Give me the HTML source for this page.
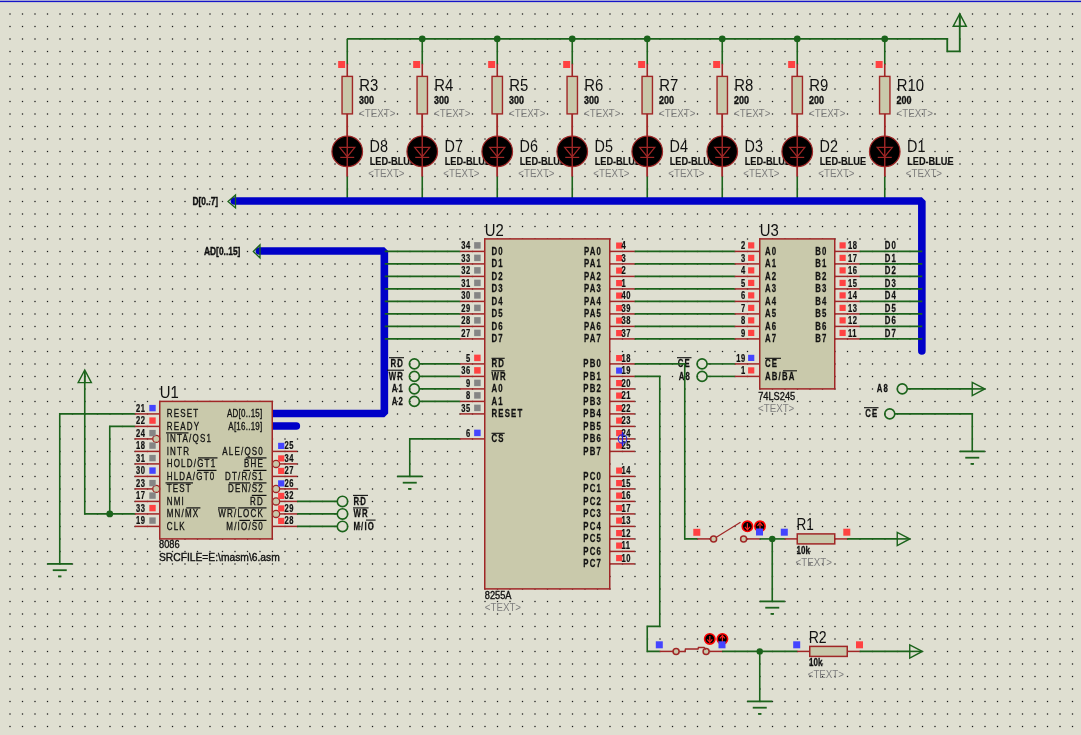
<!DOCTYPE html><html><head><meta charset="utf-8"><style>html,body{margin:0;padding:0;background:#dfdfd1;overflow:hidden}svg{display:block;will-change:transform}text{font-family:"Liberation Sans", sans-serif}</style></head><body>
<svg width="1081" height="735" viewBox="0 0 1081 735">
<defs><pattern id="g" x="0" y="0" width="25" height="25" patternUnits="userSpaceOnUse"><rect x="21.85" y="0.85" width="1.3" height="1.3" fill="#1c1c1c"/><rect x="9.35" y="0.85" width="1.3" height="1.3" fill="#1c1c1c"/><rect x="21.85" y="13.35" width="1.3" height="1.3" fill="#1c1c1c"/><rect x="9.35" y="13.35" width="1.3" height="1.3" fill="#1c1c1c"/></pattern></defs>
<rect width="1081" height="735" fill="#dfdfd1"/>
<rect x="0" y="8" width="1081" height="727" fill="url(#g)"/>
<rect x="0" y="0" width="1081" height="1" fill="#a4a4d8"/><rect x="0" y="1" width="1081" height="1" fill="#1414c8"/><rect x="0" y="2" width="1081" height="1" fill="#9898d0" fill-opacity="0.35"/>
<path d="M347.25 38.9 L947.25 38.9 L947.25 51.4 L959.75 51.4 L959.75 14" stroke="#1b631b" stroke-width="1.8" fill="none" stroke-linecap="butt" stroke-linejoin="miter"/>
<path d="M959.75 13.8 L953.15 26.3 L966.35 26.3 Z" fill="none" stroke="#1b631b" stroke-width="1.4"/>
<path d="M959.75 26.3 L959.75 14.8" stroke="#1b631b" stroke-width="1.6" fill="none" stroke-linecap="butt" stroke-linejoin="miter"/>
<path d="M347.25 38.9 L347.25 63.9" stroke="#1b631b" stroke-width="1.6" fill="none" stroke-linecap="butt" stroke-linejoin="miter"/>
<path d="M347.25 63.9 L347.25 176.4" stroke="#a02626" stroke-width="1.6" fill="none" stroke-linecap="butt" stroke-linejoin="miter"/>
<path d="M347.25 176.4 L347.25 201.4" stroke="#1b631b" stroke-width="1.6" fill="none" stroke-linecap="butt" stroke-linejoin="miter"/>
<rect x="342.05" y="76.4" width="10.4" height="37.5" fill="#c9c9ab" stroke="#a02626" stroke-width="1.4"/>
<rect x="338.15" y="61" width="7" height="7" fill="#ff4242"/>
<circle cx="347.25" cy="151.4" r="15.3" fill="#000" stroke="#a02626" stroke-width="1.2"/>
<path d="M339.65 147.4 L354.85 147.4 L347.25 156.7 Z" fill="none" stroke="#a02626" stroke-width="1.2"/>
<path d="M340.25 157.4 L354.25 157.4" stroke="#a02626" stroke-width="1.2" fill="none" stroke-linecap="butt" stroke-linejoin="miter"/>
<path d="M347.25 113.9 L347.25 176.4" stroke="#a02626" stroke-width="1.4" fill="none" stroke-linecap="butt" stroke-linejoin="miter"/>
<text transform="translate(359.25 90.8) scale(0.93 1)" font-size="16" font-weight="normal" fill="#111111" text-anchor="start">R3</text>
<text transform="translate(359.05 104.3) scale(0.9 1)" font-size="10" font-weight="bold" fill="#111111" text-anchor="start" stroke="#111111" stroke-width="0.3">300</text>
<text transform="translate(359.05 116.8) scale(0.93 1)" font-size="10.5" font-weight="normal" fill="#7e7e7e" text-anchor="start">&lt;TEXT&gt;</text>
<text transform="translate(369.55 151.5) scale(0.9 1)" font-size="16" font-weight="normal" fill="#111111" text-anchor="start">D8</text>
<text transform="translate(369.65 164.8) scale(0.92 1)" font-size="10" font-weight="bold" fill="#111111" text-anchor="start" stroke="#111111" stroke-width="0.15">LED-BLUE</text>
<text transform="translate(368.25 176.8) scale(0.93 1)" font-size="10.5" font-weight="normal" fill="#7e7e7e" text-anchor="start">&lt;TEXT&gt;</text>
<path d="M422.25 38.9 L422.25 63.9" stroke="#1b631b" stroke-width="1.6" fill="none" stroke-linecap="butt" stroke-linejoin="miter"/>
<path d="M422.25 63.9 L422.25 176.4" stroke="#a02626" stroke-width="1.6" fill="none" stroke-linecap="butt" stroke-linejoin="miter"/>
<path d="M422.25 176.4 L422.25 201.4" stroke="#1b631b" stroke-width="1.6" fill="none" stroke-linecap="butt" stroke-linejoin="miter"/>
<rect x="417.05" y="76.4" width="10.4" height="37.5" fill="#c9c9ab" stroke="#a02626" stroke-width="1.4"/>
<rect x="413.15" y="61" width="7" height="7" fill="#ff4242"/>
<circle cx="422.25" cy="38.9" r="3.3" fill="#1b631b"/>
<circle cx="422.25" cy="151.4" r="15.3" fill="#000" stroke="#a02626" stroke-width="1.2"/>
<path d="M414.65 147.4 L429.85 147.4 L422.25 156.7 Z" fill="none" stroke="#a02626" stroke-width="1.2"/>
<path d="M415.25 157.4 L429.25 157.4" stroke="#a02626" stroke-width="1.2" fill="none" stroke-linecap="butt" stroke-linejoin="miter"/>
<path d="M422.25 113.9 L422.25 176.4" stroke="#a02626" stroke-width="1.4" fill="none" stroke-linecap="butt" stroke-linejoin="miter"/>
<text transform="translate(434.25 90.8) scale(0.93 1)" font-size="16" font-weight="normal" fill="#111111" text-anchor="start">R4</text>
<text transform="translate(434.05 104.3) scale(0.9 1)" font-size="10" font-weight="bold" fill="#111111" text-anchor="start" stroke="#111111" stroke-width="0.3">300</text>
<text transform="translate(434.05 116.8) scale(0.93 1)" font-size="10.5" font-weight="normal" fill="#7e7e7e" text-anchor="start">&lt;TEXT&gt;</text>
<text transform="translate(444.55 151.5) scale(0.9 1)" font-size="16" font-weight="normal" fill="#111111" text-anchor="start">D7</text>
<text transform="translate(444.65 164.8) scale(0.92 1)" font-size="10" font-weight="bold" fill="#111111" text-anchor="start" stroke="#111111" stroke-width="0.15">LED-BLUE</text>
<text transform="translate(443.25 176.8) scale(0.93 1)" font-size="10.5" font-weight="normal" fill="#7e7e7e" text-anchor="start">&lt;TEXT&gt;</text>
<path d="M497.25 38.9 L497.25 63.9" stroke="#1b631b" stroke-width="1.6" fill="none" stroke-linecap="butt" stroke-linejoin="miter"/>
<path d="M497.25 63.9 L497.25 176.4" stroke="#a02626" stroke-width="1.6" fill="none" stroke-linecap="butt" stroke-linejoin="miter"/>
<path d="M497.25 176.4 L497.25 201.4" stroke="#1b631b" stroke-width="1.6" fill="none" stroke-linecap="butt" stroke-linejoin="miter"/>
<rect x="492.05" y="76.4" width="10.4" height="37.5" fill="#c9c9ab" stroke="#a02626" stroke-width="1.4"/>
<rect x="488.15" y="61" width="7" height="7" fill="#ff4242"/>
<circle cx="497.25" cy="38.9" r="3.3" fill="#1b631b"/>
<circle cx="497.25" cy="151.4" r="15.3" fill="#000" stroke="#a02626" stroke-width="1.2"/>
<path d="M489.65 147.4 L504.85 147.4 L497.25 156.7 Z" fill="none" stroke="#a02626" stroke-width="1.2"/>
<path d="M490.25 157.4 L504.25 157.4" stroke="#a02626" stroke-width="1.2" fill="none" stroke-linecap="butt" stroke-linejoin="miter"/>
<path d="M497.25 113.9 L497.25 176.4" stroke="#a02626" stroke-width="1.4" fill="none" stroke-linecap="butt" stroke-linejoin="miter"/>
<text transform="translate(509.25 90.8) scale(0.93 1)" font-size="16" font-weight="normal" fill="#111111" text-anchor="start">R5</text>
<text transform="translate(509.05 104.3) scale(0.9 1)" font-size="10" font-weight="bold" fill="#111111" text-anchor="start" stroke="#111111" stroke-width="0.3">300</text>
<text transform="translate(509.05 116.8) scale(0.93 1)" font-size="10.5" font-weight="normal" fill="#7e7e7e" text-anchor="start">&lt;TEXT&gt;</text>
<text transform="translate(519.55 151.5) scale(0.9 1)" font-size="16" font-weight="normal" fill="#111111" text-anchor="start">D6</text>
<text transform="translate(519.65 164.8) scale(0.92 1)" font-size="10" font-weight="bold" fill="#111111" text-anchor="start" stroke="#111111" stroke-width="0.15">LED-BLUE</text>
<text transform="translate(518.25 176.8) scale(0.93 1)" font-size="10.5" font-weight="normal" fill="#7e7e7e" text-anchor="start">&lt;TEXT&gt;</text>
<path d="M572.25 38.9 L572.25 63.9" stroke="#1b631b" stroke-width="1.6" fill="none" stroke-linecap="butt" stroke-linejoin="miter"/>
<path d="M572.25 63.9 L572.25 176.4" stroke="#a02626" stroke-width="1.6" fill="none" stroke-linecap="butt" stroke-linejoin="miter"/>
<path d="M572.25 176.4 L572.25 201.4" stroke="#1b631b" stroke-width="1.6" fill="none" stroke-linecap="butt" stroke-linejoin="miter"/>
<rect x="567.05" y="76.4" width="10.4" height="37.5" fill="#c9c9ab" stroke="#a02626" stroke-width="1.4"/>
<rect x="563.15" y="61" width="7" height="7" fill="#ff4242"/>
<circle cx="572.25" cy="38.9" r="3.3" fill="#1b631b"/>
<circle cx="572.25" cy="151.4" r="15.3" fill="#000" stroke="#a02626" stroke-width="1.2"/>
<path d="M564.65 147.4 L579.85 147.4 L572.25 156.7 Z" fill="none" stroke="#a02626" stroke-width="1.2"/>
<path d="M565.25 157.4 L579.25 157.4" stroke="#a02626" stroke-width="1.2" fill="none" stroke-linecap="butt" stroke-linejoin="miter"/>
<path d="M572.25 113.9 L572.25 176.4" stroke="#a02626" stroke-width="1.4" fill="none" stroke-linecap="butt" stroke-linejoin="miter"/>
<text transform="translate(584.25 90.8) scale(0.93 1)" font-size="16" font-weight="normal" fill="#111111" text-anchor="start">R6</text>
<text transform="translate(584.05 104.3) scale(0.9 1)" font-size="10" font-weight="bold" fill="#111111" text-anchor="start" stroke="#111111" stroke-width="0.3">300</text>
<text transform="translate(584.05 116.8) scale(0.93 1)" font-size="10.5" font-weight="normal" fill="#7e7e7e" text-anchor="start">&lt;TEXT&gt;</text>
<text transform="translate(594.55 151.5) scale(0.9 1)" font-size="16" font-weight="normal" fill="#111111" text-anchor="start">D5</text>
<text transform="translate(594.65 164.8) scale(0.92 1)" font-size="10" font-weight="bold" fill="#111111" text-anchor="start" stroke="#111111" stroke-width="0.15">LED-BLUE</text>
<text transform="translate(593.25 176.8) scale(0.93 1)" font-size="10.5" font-weight="normal" fill="#7e7e7e" text-anchor="start">&lt;TEXT&gt;</text>
<path d="M647.25 38.9 L647.25 63.9" stroke="#1b631b" stroke-width="1.6" fill="none" stroke-linecap="butt" stroke-linejoin="miter"/>
<path d="M647.25 63.9 L647.25 176.4" stroke="#a02626" stroke-width="1.6" fill="none" stroke-linecap="butt" stroke-linejoin="miter"/>
<path d="M647.25 176.4 L647.25 201.4" stroke="#1b631b" stroke-width="1.6" fill="none" stroke-linecap="butt" stroke-linejoin="miter"/>
<rect x="642.05" y="76.4" width="10.4" height="37.5" fill="#c9c9ab" stroke="#a02626" stroke-width="1.4"/>
<rect x="638.15" y="61" width="7" height="7" fill="#ff4242"/>
<circle cx="647.25" cy="38.9" r="3.3" fill="#1b631b"/>
<circle cx="647.25" cy="151.4" r="15.3" fill="#000" stroke="#a02626" stroke-width="1.2"/>
<path d="M639.65 147.4 L654.85 147.4 L647.25 156.7 Z" fill="none" stroke="#a02626" stroke-width="1.2"/>
<path d="M640.25 157.4 L654.25 157.4" stroke="#a02626" stroke-width="1.2" fill="none" stroke-linecap="butt" stroke-linejoin="miter"/>
<path d="M647.25 113.9 L647.25 176.4" stroke="#a02626" stroke-width="1.4" fill="none" stroke-linecap="butt" stroke-linejoin="miter"/>
<text transform="translate(659.25 90.8) scale(0.93 1)" font-size="16" font-weight="normal" fill="#111111" text-anchor="start">R7</text>
<text transform="translate(659.05 104.3) scale(0.9 1)" font-size="10" font-weight="bold" fill="#111111" text-anchor="start" stroke="#111111" stroke-width="0.3">200</text>
<text transform="translate(659.05 116.8) scale(0.93 1)" font-size="10.5" font-weight="normal" fill="#7e7e7e" text-anchor="start">&lt;TEXT&gt;</text>
<text transform="translate(669.55 151.5) scale(0.9 1)" font-size="16" font-weight="normal" fill="#111111" text-anchor="start">D4</text>
<text transform="translate(669.65 164.8) scale(0.92 1)" font-size="10" font-weight="bold" fill="#111111" text-anchor="start" stroke="#111111" stroke-width="0.15">LED-BLUE</text>
<text transform="translate(668.25 176.8) scale(0.93 1)" font-size="10.5" font-weight="normal" fill="#7e7e7e" text-anchor="start">&lt;TEXT&gt;</text>
<path d="M722.25 38.9 L722.25 63.9" stroke="#1b631b" stroke-width="1.6" fill="none" stroke-linecap="butt" stroke-linejoin="miter"/>
<path d="M722.25 63.9 L722.25 176.4" stroke="#a02626" stroke-width="1.6" fill="none" stroke-linecap="butt" stroke-linejoin="miter"/>
<path d="M722.25 176.4 L722.25 201.4" stroke="#1b631b" stroke-width="1.6" fill="none" stroke-linecap="butt" stroke-linejoin="miter"/>
<rect x="717.05" y="76.4" width="10.4" height="37.5" fill="#c9c9ab" stroke="#a02626" stroke-width="1.4"/>
<rect x="713.15" y="61" width="7" height="7" fill="#ff4242"/>
<circle cx="722.25" cy="38.9" r="3.3" fill="#1b631b"/>
<circle cx="722.25" cy="151.4" r="15.3" fill="#000" stroke="#a02626" stroke-width="1.2"/>
<path d="M714.65 147.4 L729.85 147.4 L722.25 156.7 Z" fill="none" stroke="#a02626" stroke-width="1.2"/>
<path d="M715.25 157.4 L729.25 157.4" stroke="#a02626" stroke-width="1.2" fill="none" stroke-linecap="butt" stroke-linejoin="miter"/>
<path d="M722.25 113.9 L722.25 176.4" stroke="#a02626" stroke-width="1.4" fill="none" stroke-linecap="butt" stroke-linejoin="miter"/>
<text transform="translate(734.25 90.8) scale(0.93 1)" font-size="16" font-weight="normal" fill="#111111" text-anchor="start">R8</text>
<text transform="translate(734.05 104.3) scale(0.9 1)" font-size="10" font-weight="bold" fill="#111111" text-anchor="start" stroke="#111111" stroke-width="0.3">200</text>
<text transform="translate(734.05 116.8) scale(0.93 1)" font-size="10.5" font-weight="normal" fill="#7e7e7e" text-anchor="start">&lt;TEXT&gt;</text>
<text transform="translate(744.55 151.5) scale(0.9 1)" font-size="16" font-weight="normal" fill="#111111" text-anchor="start">D3</text>
<text transform="translate(744.65 164.8) scale(0.92 1)" font-size="10" font-weight="bold" fill="#111111" text-anchor="start" stroke="#111111" stroke-width="0.15">LED-BLUE</text>
<text transform="translate(743.25 176.8) scale(0.93 1)" font-size="10.5" font-weight="normal" fill="#7e7e7e" text-anchor="start">&lt;TEXT&gt;</text>
<path d="M797.25 38.9 L797.25 63.9" stroke="#1b631b" stroke-width="1.6" fill="none" stroke-linecap="butt" stroke-linejoin="miter"/>
<path d="M797.25 63.9 L797.25 176.4" stroke="#a02626" stroke-width="1.6" fill="none" stroke-linecap="butt" stroke-linejoin="miter"/>
<path d="M797.25 176.4 L797.25 201.4" stroke="#1b631b" stroke-width="1.6" fill="none" stroke-linecap="butt" stroke-linejoin="miter"/>
<rect x="792.05" y="76.4" width="10.4" height="37.5" fill="#c9c9ab" stroke="#a02626" stroke-width="1.4"/>
<rect x="788.15" y="61" width="7" height="7" fill="#ff4242"/>
<circle cx="797.25" cy="38.9" r="3.3" fill="#1b631b"/>
<circle cx="797.25" cy="151.4" r="15.3" fill="#000" stroke="#a02626" stroke-width="1.2"/>
<path d="M789.65 147.4 L804.85 147.4 L797.25 156.7 Z" fill="none" stroke="#a02626" stroke-width="1.2"/>
<path d="M790.25 157.4 L804.25 157.4" stroke="#a02626" stroke-width="1.2" fill="none" stroke-linecap="butt" stroke-linejoin="miter"/>
<path d="M797.25 113.9 L797.25 176.4" stroke="#a02626" stroke-width="1.4" fill="none" stroke-linecap="butt" stroke-linejoin="miter"/>
<text transform="translate(809.25 90.8) scale(0.93 1)" font-size="16" font-weight="normal" fill="#111111" text-anchor="start">R9</text>
<text transform="translate(809.05 104.3) scale(0.9 1)" font-size="10" font-weight="bold" fill="#111111" text-anchor="start" stroke="#111111" stroke-width="0.3">200</text>
<text transform="translate(809.05 116.8) scale(0.93 1)" font-size="10.5" font-weight="normal" fill="#7e7e7e" text-anchor="start">&lt;TEXT&gt;</text>
<text transform="translate(819.55 151.5) scale(0.9 1)" font-size="16" font-weight="normal" fill="#111111" text-anchor="start">D2</text>
<text transform="translate(819.65 164.8) scale(0.92 1)" font-size="10" font-weight="bold" fill="#111111" text-anchor="start" stroke="#111111" stroke-width="0.15">LED-BLUE</text>
<text transform="translate(818.25 176.8) scale(0.93 1)" font-size="10.5" font-weight="normal" fill="#7e7e7e" text-anchor="start">&lt;TEXT&gt;</text>
<path d="M884.75 38.9 L884.75 63.9" stroke="#1b631b" stroke-width="1.6" fill="none" stroke-linecap="butt" stroke-linejoin="miter"/>
<path d="M884.75 63.9 L884.75 176.4" stroke="#a02626" stroke-width="1.6" fill="none" stroke-linecap="butt" stroke-linejoin="miter"/>
<path d="M884.75 176.4 L884.75 201.4" stroke="#1b631b" stroke-width="1.6" fill="none" stroke-linecap="butt" stroke-linejoin="miter"/>
<rect x="879.55" y="76.4" width="10.4" height="37.5" fill="#c9c9ab" stroke="#a02626" stroke-width="1.4"/>
<rect x="875.65" y="61" width="7" height="7" fill="#ff4242"/>
<circle cx="884.75" cy="38.9" r="3.3" fill="#1b631b"/>
<circle cx="884.75" cy="151.4" r="15.3" fill="#000" stroke="#a02626" stroke-width="1.2"/>
<path d="M877.15 147.4 L892.35 147.4 L884.75 156.7 Z" fill="none" stroke="#a02626" stroke-width="1.2"/>
<path d="M877.75 157.4 L891.75 157.4" stroke="#a02626" stroke-width="1.2" fill="none" stroke-linecap="butt" stroke-linejoin="miter"/>
<path d="M884.75 113.9 L884.75 176.4" stroke="#a02626" stroke-width="1.4" fill="none" stroke-linecap="butt" stroke-linejoin="miter"/>
<text transform="translate(896.75 90.8) scale(0.93 1)" font-size="16" font-weight="normal" fill="#111111" text-anchor="start">R10</text>
<text transform="translate(896.55 104.3) scale(0.9 1)" font-size="10" font-weight="bold" fill="#111111" text-anchor="start" stroke="#111111" stroke-width="0.3">200</text>
<text transform="translate(896.55 116.8) scale(0.93 1)" font-size="10.5" font-weight="normal" fill="#7e7e7e" text-anchor="start">&lt;TEXT&gt;</text>
<text transform="translate(907.05 151.5) scale(0.9 1)" font-size="16" font-weight="normal" fill="#111111" text-anchor="start">D1</text>
<text transform="translate(907.15 164.8) scale(0.92 1)" font-size="10" font-weight="bold" fill="#111111" text-anchor="start" stroke="#111111" stroke-width="0.15">LED-BLUE</text>
<text transform="translate(905.75 176.8) scale(0.93 1)" font-size="10.5" font-weight="normal" fill="#7e7e7e" text-anchor="start">&lt;TEXT&gt;</text>
<path d="M234.35 201 L921.85 201 L921.85 351" stroke="#0000c8" stroke-width="7.6" fill="none" stroke-linecap="round" stroke-linejoin="bevel"/>
<path d="M228 201.4 L235.5 194.9 L235.5 207.9 Z" fill="none" stroke="#1b631b" stroke-width="1.3"/>
<text transform="translate(192.5 205.2) scale(0.8 1)" font-size="10.5" font-weight="bold" fill="#111111" text-anchor="start" stroke="#111111" stroke-width="0.35">D[0..7]</text>
<path d="M259.35 251 L384.35 251 L384.35 413.5 L271.85 413.5" stroke="#0000c8" stroke-width="7.6" fill="none" stroke-linecap="round" stroke-linejoin="bevel"/>
<path d="M253.3 251.4 L260 244.9 L260 257.9 Z" fill="none" stroke="#1b631b" stroke-width="1.3"/>
<text transform="translate(204 255.2) scale(0.8 1)" font-size="10.5" font-weight="bold" fill="#111111" text-anchor="start" stroke="#111111" stroke-width="0.35">AD[0..15]</text>
<path d="M271.85 426 L296.35 426" stroke="#0000c8" stroke-width="7.6" fill="none" stroke-linecap="round" stroke-linejoin="bevel"/>
<rect x="484.75" y="238.9" width="125" height="350" fill="#c9c9ab" stroke="#a02626" stroke-width="1.5"/>
<text transform="translate(484.75 235.6) scale(0.93 1)" font-size="16" font-weight="normal" fill="#111111" text-anchor="start">U2</text>
<text transform="translate(484.75 598.6) scale(0.88 1)" font-size="10.5" font-weight="normal" fill="#111111" text-anchor="start" stroke="#111111" stroke-width="0.35">8255A</text>
<text transform="translate(484.75 611) scale(0.93 1)" font-size="10.5" font-weight="normal" fill="#7e7e7e" text-anchor="start">&lt;TEXT&gt;</text>
<path d="M459.75 251.4 L484.75 251.4" stroke="#a02626" stroke-width="1.5" fill="none" stroke-linecap="butt" stroke-linejoin="miter"/>
<rect x="474.15" y="242.15" width="6.5" height="6.5" fill="#858585"/>
<text transform="translate(470.8 249.4) scale(0.72 1)" font-size="10.5" font-weight="bold" fill="#111111" text-anchor="end" stroke="#111111" stroke-width="0.25" letter-spacing="0.8">34</text>
<text transform="translate(491.5 254.8) scale(0.78 1)" font-size="10" font-weight="bold" fill="#111111" text-anchor="start" stroke="#111111" stroke-width="0.25" letter-spacing="1.5">D0</text>
<path d="M459.75 263.9 L484.75 263.9" stroke="#a02626" stroke-width="1.5" fill="none" stroke-linecap="butt" stroke-linejoin="miter"/>
<rect x="474.15" y="254.65" width="6.5" height="6.5" fill="#858585"/>
<text transform="translate(470.8 261.9) scale(0.72 1)" font-size="10.5" font-weight="bold" fill="#111111" text-anchor="end" stroke="#111111" stroke-width="0.25" letter-spacing="0.8">33</text>
<text transform="translate(491.5 267.3) scale(0.78 1)" font-size="10" font-weight="bold" fill="#111111" text-anchor="start" stroke="#111111" stroke-width="0.25" letter-spacing="1.5">D1</text>
<path d="M459.75 276.4 L484.75 276.4" stroke="#a02626" stroke-width="1.5" fill="none" stroke-linecap="butt" stroke-linejoin="miter"/>
<rect x="474.15" y="267.15" width="6.5" height="6.5" fill="#858585"/>
<text transform="translate(470.8 274.4) scale(0.72 1)" font-size="10.5" font-weight="bold" fill="#111111" text-anchor="end" stroke="#111111" stroke-width="0.25" letter-spacing="0.8">32</text>
<text transform="translate(491.5 279.8) scale(0.78 1)" font-size="10" font-weight="bold" fill="#111111" text-anchor="start" stroke="#111111" stroke-width="0.25" letter-spacing="1.5">D2</text>
<path d="M459.75 288.9 L484.75 288.9" stroke="#a02626" stroke-width="1.5" fill="none" stroke-linecap="butt" stroke-linejoin="miter"/>
<rect x="474.15" y="279.65" width="6.5" height="6.5" fill="#858585"/>
<text transform="translate(470.8 286.9) scale(0.72 1)" font-size="10.5" font-weight="bold" fill="#111111" text-anchor="end" stroke="#111111" stroke-width="0.25" letter-spacing="0.8">31</text>
<text transform="translate(491.5 292.3) scale(0.78 1)" font-size="10" font-weight="bold" fill="#111111" text-anchor="start" stroke="#111111" stroke-width="0.25" letter-spacing="1.5">D3</text>
<path d="M459.75 301.4 L484.75 301.4" stroke="#a02626" stroke-width="1.5" fill="none" stroke-linecap="butt" stroke-linejoin="miter"/>
<rect x="474.15" y="292.15" width="6.5" height="6.5" fill="#858585"/>
<text transform="translate(470.8 299.4) scale(0.72 1)" font-size="10.5" font-weight="bold" fill="#111111" text-anchor="end" stroke="#111111" stroke-width="0.25" letter-spacing="0.8">30</text>
<text transform="translate(491.5 304.8) scale(0.78 1)" font-size="10" font-weight="bold" fill="#111111" text-anchor="start" stroke="#111111" stroke-width="0.25" letter-spacing="1.5">D4</text>
<path d="M459.75 313.9 L484.75 313.9" stroke="#a02626" stroke-width="1.5" fill="none" stroke-linecap="butt" stroke-linejoin="miter"/>
<rect x="474.15" y="304.65" width="6.5" height="6.5" fill="#858585"/>
<text transform="translate(470.8 311.9) scale(0.72 1)" font-size="10.5" font-weight="bold" fill="#111111" text-anchor="end" stroke="#111111" stroke-width="0.25" letter-spacing="0.8">29</text>
<text transform="translate(491.5 317.3) scale(0.78 1)" font-size="10" font-weight="bold" fill="#111111" text-anchor="start" stroke="#111111" stroke-width="0.25" letter-spacing="1.5">D5</text>
<path d="M459.75 326.4 L484.75 326.4" stroke="#a02626" stroke-width="1.5" fill="none" stroke-linecap="butt" stroke-linejoin="miter"/>
<rect x="474.15" y="317.15" width="6.5" height="6.5" fill="#858585"/>
<text transform="translate(470.8 324.4) scale(0.72 1)" font-size="10.5" font-weight="bold" fill="#111111" text-anchor="end" stroke="#111111" stroke-width="0.25" letter-spacing="0.8">28</text>
<text transform="translate(491.5 329.8) scale(0.78 1)" font-size="10" font-weight="bold" fill="#111111" text-anchor="start" stroke="#111111" stroke-width="0.25" letter-spacing="1.5">D6</text>
<path d="M459.75 338.9 L484.75 338.9" stroke="#a02626" stroke-width="1.5" fill="none" stroke-linecap="butt" stroke-linejoin="miter"/>
<rect x="474.15" y="329.65" width="6.5" height="6.5" fill="#858585"/>
<text transform="translate(470.8 336.9) scale(0.72 1)" font-size="10.5" font-weight="bold" fill="#111111" text-anchor="end" stroke="#111111" stroke-width="0.25" letter-spacing="0.8">27</text>
<text transform="translate(491.5 342.3) scale(0.78 1)" font-size="10" font-weight="bold" fill="#111111" text-anchor="start" stroke="#111111" stroke-width="0.25" letter-spacing="1.5">D7</text>
<path d="M459.75 363.9 L484.75 363.9" stroke="#a02626" stroke-width="1.5" fill="none" stroke-linecap="butt" stroke-linejoin="miter"/>
<rect x="474.15" y="354.65" width="6.5" height="6.5" fill="#ff4242"/>
<text transform="translate(470.8 361.9) scale(0.72 1)" font-size="10.5" font-weight="bold" fill="#111111" text-anchor="end" stroke="#111111" stroke-width="0.25" letter-spacing="0.8">5</text>
<text transform="translate(491.5 367.3) scale(0.78 1)" font-size="10" font-weight="bold" fill="#111111" text-anchor="start" stroke="#111111" stroke-width="0.25" letter-spacing="1.5">RD</text>
<path d="M491.5 358.3 L504.7 358.3" stroke="#111111" stroke-width="1.1" fill="none" stroke-linecap="butt" stroke-linejoin="miter"/>
<path d="M459.75 376.4 L484.75 376.4" stroke="#a02626" stroke-width="1.5" fill="none" stroke-linecap="butt" stroke-linejoin="miter"/>
<rect x="474.15" y="367.15" width="6.5" height="6.5" fill="#ff4242"/>
<text transform="translate(470.8 374.4) scale(0.72 1)" font-size="10.5" font-weight="bold" fill="#111111" text-anchor="end" stroke="#111111" stroke-width="0.25" letter-spacing="0.8">36</text>
<text transform="translate(491.5 379.8) scale(0.78 1)" font-size="10" font-weight="bold" fill="#111111" text-anchor="start" stroke="#111111" stroke-width="0.25" letter-spacing="1.5">WR</text>
<path d="M491.5 370.8 L504.7 370.8" stroke="#111111" stroke-width="1.1" fill="none" stroke-linecap="butt" stroke-linejoin="miter"/>
<path d="M459.75 388.9 L484.75 388.9" stroke="#a02626" stroke-width="1.5" fill="none" stroke-linecap="butt" stroke-linejoin="miter"/>
<rect x="474.15" y="379.65" width="6.5" height="6.5" fill="#858585"/>
<text transform="translate(470.8 386.9) scale(0.72 1)" font-size="10.5" font-weight="bold" fill="#111111" text-anchor="end" stroke="#111111" stroke-width="0.25" letter-spacing="0.8">9</text>
<text transform="translate(491.5 392.3) scale(0.78 1)" font-size="10" font-weight="bold" fill="#111111" text-anchor="start" stroke="#111111" stroke-width="0.25" letter-spacing="1.5">A0</text>
<path d="M459.75 401.4 L484.75 401.4" stroke="#a02626" stroke-width="1.5" fill="none" stroke-linecap="butt" stroke-linejoin="miter"/>
<rect x="474.15" y="392.15" width="6.5" height="6.5" fill="#858585"/>
<text transform="translate(470.8 399.4) scale(0.72 1)" font-size="10.5" font-weight="bold" fill="#111111" text-anchor="end" stroke="#111111" stroke-width="0.25" letter-spacing="0.8">8</text>
<text transform="translate(491.5 404.8) scale(0.78 1)" font-size="10" font-weight="bold" fill="#111111" text-anchor="start" stroke="#111111" stroke-width="0.25" letter-spacing="1.5">A1</text>
<path d="M459.75 413.9 L484.75 413.9" stroke="#a02626" stroke-width="1.5" fill="none" stroke-linecap="butt" stroke-linejoin="miter"/>
<rect x="474.15" y="404.65" width="6.5" height="6.5" fill="#858585"/>
<text transform="translate(470.8 411.9) scale(0.72 1)" font-size="10.5" font-weight="bold" fill="#111111" text-anchor="end" stroke="#111111" stroke-width="0.25" letter-spacing="0.8">35</text>
<text transform="translate(491.5 417.3) scale(0.78 1)" font-size="10" font-weight="bold" fill="#111111" text-anchor="start" stroke="#111111" stroke-width="0.25" letter-spacing="1.5">RESET</text>
<path d="M459.75 438.9 L484.75 438.9" stroke="#a02626" stroke-width="1.5" fill="none" stroke-linecap="butt" stroke-linejoin="miter"/>
<rect x="474.15" y="429.65" width="6.5" height="6.5" fill="#4444ff"/>
<text transform="translate(470.8 436.9) scale(0.72 1)" font-size="10.5" font-weight="bold" fill="#111111" text-anchor="end" stroke="#111111" stroke-width="0.25" letter-spacing="0.8">6</text>
<text transform="translate(491.5 442.3) scale(0.78 1)" font-size="10" font-weight="bold" fill="#111111" text-anchor="start" stroke="#111111" stroke-width="0.25" letter-spacing="1.5">CS</text>
<path d="M491.5 433.3 L504.7 433.3" stroke="#111111" stroke-width="1.1" fill="none" stroke-linecap="butt" stroke-linejoin="miter"/>
<path d="M609.75 251.4 L634.75 251.4" stroke="#a02626" stroke-width="1.5" fill="none" stroke-linecap="butt" stroke-linejoin="miter"/>
<rect x="616.1" y="242.5" width="6.2" height="6.2" fill="#ff4242"/>
<text transform="translate(621.5 249.4) scale(0.72 1)" font-size="10.5" font-weight="bold" fill="#111111" text-anchor="start" stroke="#111111" stroke-width="0.25" letter-spacing="0.8">4</text>
<text transform="translate(602 254.8) scale(0.78 1)" font-size="10" font-weight="bold" fill="#111111" text-anchor="end" stroke="#111111" stroke-width="0.25" letter-spacing="1.5">PA0</text>
<path d="M609.75 263.9 L634.75 263.9" stroke="#a02626" stroke-width="1.5" fill="none" stroke-linecap="butt" stroke-linejoin="miter"/>
<rect x="616.1" y="255" width="6.2" height="6.2" fill="#ff4242"/>
<text transform="translate(621.5 261.9) scale(0.72 1)" font-size="10.5" font-weight="bold" fill="#111111" text-anchor="start" stroke="#111111" stroke-width="0.25" letter-spacing="0.8">3</text>
<text transform="translate(602 267.3) scale(0.78 1)" font-size="10" font-weight="bold" fill="#111111" text-anchor="end" stroke="#111111" stroke-width="0.25" letter-spacing="1.5">PA1</text>
<path d="M609.75 276.4 L634.75 276.4" stroke="#a02626" stroke-width="1.5" fill="none" stroke-linecap="butt" stroke-linejoin="miter"/>
<rect x="616.1" y="267.5" width="6.2" height="6.2" fill="#ff4242"/>
<text transform="translate(621.5 274.4) scale(0.72 1)" font-size="10.5" font-weight="bold" fill="#111111" text-anchor="start" stroke="#111111" stroke-width="0.25" letter-spacing="0.8">2</text>
<text transform="translate(602 279.8) scale(0.78 1)" font-size="10" font-weight="bold" fill="#111111" text-anchor="end" stroke="#111111" stroke-width="0.25" letter-spacing="1.5">PA2</text>
<path d="M609.75 288.9 L634.75 288.9" stroke="#a02626" stroke-width="1.5" fill="none" stroke-linecap="butt" stroke-linejoin="miter"/>
<rect x="616.1" y="280" width="6.2" height="6.2" fill="#ff4242"/>
<text transform="translate(621.5 286.9) scale(0.72 1)" font-size="10.5" font-weight="bold" fill="#111111" text-anchor="start" stroke="#111111" stroke-width="0.25" letter-spacing="0.8">1</text>
<text transform="translate(602 292.3) scale(0.78 1)" font-size="10" font-weight="bold" fill="#111111" text-anchor="end" stroke="#111111" stroke-width="0.25" letter-spacing="1.5">PA3</text>
<path d="M609.75 301.4 L634.75 301.4" stroke="#a02626" stroke-width="1.5" fill="none" stroke-linecap="butt" stroke-linejoin="miter"/>
<rect x="616.1" y="292.5" width="6.2" height="6.2" fill="#ff4242"/>
<text transform="translate(621.5 299.4) scale(0.72 1)" font-size="10.5" font-weight="bold" fill="#111111" text-anchor="start" stroke="#111111" stroke-width="0.25" letter-spacing="0.8">40</text>
<text transform="translate(602 304.8) scale(0.78 1)" font-size="10" font-weight="bold" fill="#111111" text-anchor="end" stroke="#111111" stroke-width="0.25" letter-spacing="1.5">PA4</text>
<path d="M609.75 313.9 L634.75 313.9" stroke="#a02626" stroke-width="1.5" fill="none" stroke-linecap="butt" stroke-linejoin="miter"/>
<rect x="616.1" y="305" width="6.2" height="6.2" fill="#ff4242"/>
<text transform="translate(621.5 311.9) scale(0.72 1)" font-size="10.5" font-weight="bold" fill="#111111" text-anchor="start" stroke="#111111" stroke-width="0.25" letter-spacing="0.8">39</text>
<text transform="translate(602 317.3) scale(0.78 1)" font-size="10" font-weight="bold" fill="#111111" text-anchor="end" stroke="#111111" stroke-width="0.25" letter-spacing="1.5">PA5</text>
<path d="M609.75 326.4 L634.75 326.4" stroke="#a02626" stroke-width="1.5" fill="none" stroke-linecap="butt" stroke-linejoin="miter"/>
<rect x="616.1" y="317.5" width="6.2" height="6.2" fill="#ff4242"/>
<text transform="translate(621.5 324.4) scale(0.72 1)" font-size="10.5" font-weight="bold" fill="#111111" text-anchor="start" stroke="#111111" stroke-width="0.25" letter-spacing="0.8">38</text>
<text transform="translate(602 329.8) scale(0.78 1)" font-size="10" font-weight="bold" fill="#111111" text-anchor="end" stroke="#111111" stroke-width="0.25" letter-spacing="1.5">PA6</text>
<path d="M609.75 338.9 L634.75 338.9" stroke="#a02626" stroke-width="1.5" fill="none" stroke-linecap="butt" stroke-linejoin="miter"/>
<rect x="616.1" y="330" width="6.2" height="6.2" fill="#ff4242"/>
<text transform="translate(621.5 336.9) scale(0.72 1)" font-size="10.5" font-weight="bold" fill="#111111" text-anchor="start" stroke="#111111" stroke-width="0.25" letter-spacing="0.8">37</text>
<text transform="translate(602 342.3) scale(0.78 1)" font-size="10" font-weight="bold" fill="#111111" text-anchor="end" stroke="#111111" stroke-width="0.25" letter-spacing="1.5">PA7</text>
<path d="M609.75 363.9 L634.75 363.9" stroke="#a02626" stroke-width="1.5" fill="none" stroke-linecap="butt" stroke-linejoin="miter"/>
<rect x="616.1" y="355" width="6.2" height="6.2" fill="#ff4242"/>
<text transform="translate(621.5 361.9) scale(0.72 1)" font-size="10.5" font-weight="bold" fill="#111111" text-anchor="start" stroke="#111111" stroke-width="0.25" letter-spacing="0.8">18</text>
<text transform="translate(602 367.3) scale(0.78 1)" font-size="10" font-weight="bold" fill="#111111" text-anchor="end" stroke="#111111" stroke-width="0.25" letter-spacing="1.5">PB0</text>
<path d="M609.75 376.4 L634.75 376.4" stroke="#a02626" stroke-width="1.5" fill="none" stroke-linecap="butt" stroke-linejoin="miter"/>
<rect x="616.1" y="367.5" width="6.2" height="6.2" fill="#4444ff"/>
<text transform="translate(621.5 374.4) scale(0.72 1)" font-size="10.5" font-weight="bold" fill="#111111" text-anchor="start" stroke="#111111" stroke-width="0.25" letter-spacing="0.8">19</text>
<text transform="translate(602 379.8) scale(0.78 1)" font-size="10" font-weight="bold" fill="#111111" text-anchor="end" stroke="#111111" stroke-width="0.25" letter-spacing="1.5">PB1</text>
<path d="M609.75 388.9 L634.75 388.9" stroke="#a02626" stroke-width="1.5" fill="none" stroke-linecap="butt" stroke-linejoin="miter"/>
<rect x="616.1" y="380" width="6.2" height="6.2" fill="#ff4242"/>
<text transform="translate(621.5 386.9) scale(0.72 1)" font-size="10.5" font-weight="bold" fill="#111111" text-anchor="start" stroke="#111111" stroke-width="0.25" letter-spacing="0.8">20</text>
<text transform="translate(602 392.3) scale(0.78 1)" font-size="10" font-weight="bold" fill="#111111" text-anchor="end" stroke="#111111" stroke-width="0.25" letter-spacing="1.5">PB2</text>
<path d="M609.75 401.4 L634.75 401.4" stroke="#a02626" stroke-width="1.5" fill="none" stroke-linecap="butt" stroke-linejoin="miter"/>
<rect x="616.1" y="392.5" width="6.2" height="6.2" fill="#ff4242"/>
<text transform="translate(621.5 399.4) scale(0.72 1)" font-size="10.5" font-weight="bold" fill="#111111" text-anchor="start" stroke="#111111" stroke-width="0.25" letter-spacing="0.8">21</text>
<text transform="translate(602 404.8) scale(0.78 1)" font-size="10" font-weight="bold" fill="#111111" text-anchor="end" stroke="#111111" stroke-width="0.25" letter-spacing="1.5">PB3</text>
<path d="M609.75 413.9 L634.75 413.9" stroke="#a02626" stroke-width="1.5" fill="none" stroke-linecap="butt" stroke-linejoin="miter"/>
<rect x="616.1" y="405" width="6.2" height="6.2" fill="#ff4242"/>
<text transform="translate(621.5 411.9) scale(0.72 1)" font-size="10.5" font-weight="bold" fill="#111111" text-anchor="start" stroke="#111111" stroke-width="0.25" letter-spacing="0.8">22</text>
<text transform="translate(602 417.3) scale(0.78 1)" font-size="10" font-weight="bold" fill="#111111" text-anchor="end" stroke="#111111" stroke-width="0.25" letter-spacing="1.5">PB4</text>
<path d="M609.75 426.4 L634.75 426.4" stroke="#a02626" stroke-width="1.5" fill="none" stroke-linecap="butt" stroke-linejoin="miter"/>
<rect x="616.1" y="417.5" width="6.2" height="6.2" fill="#ff4242"/>
<text transform="translate(621.5 424.4) scale(0.72 1)" font-size="10.5" font-weight="bold" fill="#111111" text-anchor="start" stroke="#111111" stroke-width="0.25" letter-spacing="0.8">23</text>
<text transform="translate(602 429.8) scale(0.78 1)" font-size="10" font-weight="bold" fill="#111111" text-anchor="end" stroke="#111111" stroke-width="0.25" letter-spacing="1.5">PB5</text>
<path d="M609.75 438.9 L634.75 438.9" stroke="#a02626" stroke-width="1.5" fill="none" stroke-linecap="butt" stroke-linejoin="miter"/>
<rect x="616.1" y="430" width="6.2" height="6.2" fill="#ff4242"/>
<text transform="translate(621.5 436.9) scale(0.72 1)" font-size="10.5" font-weight="bold" fill="#111111" text-anchor="start" stroke="#111111" stroke-width="0.25" letter-spacing="0.8">24</text>
<text transform="translate(602 442.3) scale(0.78 1)" font-size="10" font-weight="bold" fill="#111111" text-anchor="end" stroke="#111111" stroke-width="0.25" letter-spacing="1.5">PB6</text>
<path d="M609.75 451.4 L634.75 451.4" stroke="#a02626" stroke-width="1.5" fill="none" stroke-linecap="butt" stroke-linejoin="miter"/>
<rect x="616.1" y="442.5" width="6.2" height="6.2" fill="#ff4242"/>
<text transform="translate(621.5 449.4) scale(0.72 1)" font-size="10.5" font-weight="bold" fill="#111111" text-anchor="start" stroke="#111111" stroke-width="0.25" letter-spacing="0.8">25</text>
<text transform="translate(602 454.8) scale(0.78 1)" font-size="10" font-weight="bold" fill="#111111" text-anchor="end" stroke="#111111" stroke-width="0.25" letter-spacing="1.5">PB7</text>
<path d="M609.75 476.4 L634.75 476.4" stroke="#a02626" stroke-width="1.5" fill="none" stroke-linecap="butt" stroke-linejoin="miter"/>
<rect x="616.1" y="467.5" width="6.2" height="6.2" fill="#ff4242"/>
<text transform="translate(621.5 474.4) scale(0.72 1)" font-size="10.5" font-weight="bold" fill="#111111" text-anchor="start" stroke="#111111" stroke-width="0.25" letter-spacing="0.8">14</text>
<text transform="translate(602 479.8) scale(0.78 1)" font-size="10" font-weight="bold" fill="#111111" text-anchor="end" stroke="#111111" stroke-width="0.25" letter-spacing="1.5">PC0</text>
<path d="M609.75 488.9 L634.75 488.9" stroke="#a02626" stroke-width="1.5" fill="none" stroke-linecap="butt" stroke-linejoin="miter"/>
<rect x="616.1" y="480" width="6.2" height="6.2" fill="#ff4242"/>
<text transform="translate(621.5 486.9) scale(0.72 1)" font-size="10.5" font-weight="bold" fill="#111111" text-anchor="start" stroke="#111111" stroke-width="0.25" letter-spacing="0.8">15</text>
<text transform="translate(602 492.3) scale(0.78 1)" font-size="10" font-weight="bold" fill="#111111" text-anchor="end" stroke="#111111" stroke-width="0.25" letter-spacing="1.5">PC1</text>
<path d="M609.75 501.4 L634.75 501.4" stroke="#a02626" stroke-width="1.5" fill="none" stroke-linecap="butt" stroke-linejoin="miter"/>
<rect x="616.1" y="492.5" width="6.2" height="6.2" fill="#ff4242"/>
<text transform="translate(621.5 499.4) scale(0.72 1)" font-size="10.5" font-weight="bold" fill="#111111" text-anchor="start" stroke="#111111" stroke-width="0.25" letter-spacing="0.8">16</text>
<text transform="translate(602 504.8) scale(0.78 1)" font-size="10" font-weight="bold" fill="#111111" text-anchor="end" stroke="#111111" stroke-width="0.25" letter-spacing="1.5">PC2</text>
<path d="M609.75 513.9 L634.75 513.9" stroke="#a02626" stroke-width="1.5" fill="none" stroke-linecap="butt" stroke-linejoin="miter"/>
<rect x="616.1" y="505" width="6.2" height="6.2" fill="#ff4242"/>
<text transform="translate(621.5 511.9) scale(0.72 1)" font-size="10.5" font-weight="bold" fill="#111111" text-anchor="start" stroke="#111111" stroke-width="0.25" letter-spacing="0.8">17</text>
<text transform="translate(602 517.3) scale(0.78 1)" font-size="10" font-weight="bold" fill="#111111" text-anchor="end" stroke="#111111" stroke-width="0.25" letter-spacing="1.5">PC3</text>
<path d="M609.75 526.4 L634.75 526.4" stroke="#a02626" stroke-width="1.5" fill="none" stroke-linecap="butt" stroke-linejoin="miter"/>
<rect x="616.1" y="517.5" width="6.2" height="6.2" fill="#ff4242"/>
<text transform="translate(621.5 524.4) scale(0.72 1)" font-size="10.5" font-weight="bold" fill="#111111" text-anchor="start" stroke="#111111" stroke-width="0.25" letter-spacing="0.8">13</text>
<text transform="translate(602 529.8) scale(0.78 1)" font-size="10" font-weight="bold" fill="#111111" text-anchor="end" stroke="#111111" stroke-width="0.25" letter-spacing="1.5">PC4</text>
<path d="M609.75 538.9 L634.75 538.9" stroke="#a02626" stroke-width="1.5" fill="none" stroke-linecap="butt" stroke-linejoin="miter"/>
<rect x="616.1" y="530" width="6.2" height="6.2" fill="#ff4242"/>
<text transform="translate(621.5 536.9) scale(0.72 1)" font-size="10.5" font-weight="bold" fill="#111111" text-anchor="start" stroke="#111111" stroke-width="0.25" letter-spacing="0.8">12</text>
<text transform="translate(602 542.3) scale(0.78 1)" font-size="10" font-weight="bold" fill="#111111" text-anchor="end" stroke="#111111" stroke-width="0.25" letter-spacing="1.5">PC5</text>
<path d="M609.75 551.4 L634.75 551.4" stroke="#a02626" stroke-width="1.5" fill="none" stroke-linecap="butt" stroke-linejoin="miter"/>
<rect x="616.1" y="542.5" width="6.2" height="6.2" fill="#ff4242"/>
<text transform="translate(621.5 549.4) scale(0.72 1)" font-size="10.5" font-weight="bold" fill="#111111" text-anchor="start" stroke="#111111" stroke-width="0.25" letter-spacing="0.8">11</text>
<text transform="translate(602 554.8) scale(0.78 1)" font-size="10" font-weight="bold" fill="#111111" text-anchor="end" stroke="#111111" stroke-width="0.25" letter-spacing="1.5">PC6</text>
<path d="M609.75 563.9 L634.75 563.9" stroke="#a02626" stroke-width="1.5" fill="none" stroke-linecap="butt" stroke-linejoin="miter"/>
<rect x="616.1" y="555" width="6.2" height="6.2" fill="#ff4242"/>
<text transform="translate(621.5 561.9) scale(0.72 1)" font-size="10.5" font-weight="bold" fill="#111111" text-anchor="start" stroke="#111111" stroke-width="0.25" letter-spacing="0.8">10</text>
<text transform="translate(602 567.3) scale(0.78 1)" font-size="10" font-weight="bold" fill="#111111" text-anchor="end" stroke="#111111" stroke-width="0.25" letter-spacing="1.5">PC7</text>
<path d="M384.75 251.4 L459.75 251.4" stroke="#1b631b" stroke-width="1.6" fill="none" stroke-linecap="butt" stroke-linejoin="miter"/>
<path d="M384.75 263.9 L459.75 263.9" stroke="#1b631b" stroke-width="1.6" fill="none" stroke-linecap="butt" stroke-linejoin="miter"/>
<path d="M384.75 276.4 L459.75 276.4" stroke="#1b631b" stroke-width="1.6" fill="none" stroke-linecap="butt" stroke-linejoin="miter"/>
<path d="M384.75 288.9 L459.75 288.9" stroke="#1b631b" stroke-width="1.6" fill="none" stroke-linecap="butt" stroke-linejoin="miter"/>
<path d="M384.75 301.4 L459.75 301.4" stroke="#1b631b" stroke-width="1.6" fill="none" stroke-linecap="butt" stroke-linejoin="miter"/>
<path d="M384.75 313.9 L459.75 313.9" stroke="#1b631b" stroke-width="1.6" fill="none" stroke-linecap="butt" stroke-linejoin="miter"/>
<path d="M384.75 326.4 L459.75 326.4" stroke="#1b631b" stroke-width="1.6" fill="none" stroke-linecap="butt" stroke-linejoin="miter"/>
<path d="M384.75 338.9 L459.75 338.9" stroke="#1b631b" stroke-width="1.6" fill="none" stroke-linecap="butt" stroke-linejoin="miter"/>
<circle cx="414.35" cy="363.9" r="5" fill="none" stroke="#1b631b" stroke-width="1.6"/>
<path d="M419.35 363.9 L459.75 363.9" stroke="#1b631b" stroke-width="1.6" fill="none" stroke-linecap="butt" stroke-linejoin="miter"/>
<text transform="translate(404 367.4) scale(0.78 1)" font-size="10" font-weight="bold" fill="#111111" text-anchor="end" stroke="#111111" stroke-width="0.25" letter-spacing="1.5">RD</text>
<circle cx="414.35" cy="376.4" r="5" fill="none" stroke="#1b631b" stroke-width="1.6"/>
<path d="M419.35 376.4 L459.75 376.4" stroke="#1b631b" stroke-width="1.6" fill="none" stroke-linecap="butt" stroke-linejoin="miter"/>
<text transform="translate(404 379.9) scale(0.78 1)" font-size="10" font-weight="bold" fill="#111111" text-anchor="end" stroke="#111111" stroke-width="0.25" letter-spacing="1.5">WR</text>
<circle cx="414.35" cy="388.9" r="5" fill="none" stroke="#1b631b" stroke-width="1.6"/>
<path d="M419.35 388.9 L459.75 388.9" stroke="#1b631b" stroke-width="1.6" fill="none" stroke-linecap="butt" stroke-linejoin="miter"/>
<text transform="translate(404 392.4) scale(0.78 1)" font-size="10" font-weight="bold" fill="#111111" text-anchor="end" stroke="#111111" stroke-width="0.25" letter-spacing="1.5">A1</text>
<circle cx="414.35" cy="401.4" r="5" fill="none" stroke="#1b631b" stroke-width="1.6"/>
<path d="M419.35 401.4 L459.75 401.4" stroke="#1b631b" stroke-width="1.6" fill="none" stroke-linecap="butt" stroke-linejoin="miter"/>
<text transform="translate(404 404.9) scale(0.78 1)" font-size="10" font-weight="bold" fill="#111111" text-anchor="end" stroke="#111111" stroke-width="0.25" letter-spacing="1.5">A2</text>
<path d="M389 357.7 L404 357.7" stroke="#111111" stroke-width="1.1" fill="none" stroke-linecap="butt" stroke-linejoin="miter"/>
<path d="M387 370.2 L404 370.2" stroke="#111111" stroke-width="1.1" fill="none" stroke-linecap="butt" stroke-linejoin="miter"/>
<path d="M459.75 438.9 L409.75 438.9 L409.75 476.4" stroke="#1b631b" stroke-width="1.6" fill="none" stroke-linecap="butt" stroke-linejoin="miter"/>
<path d="M397.25 476.4 L422.25 476.4" stroke="#1b631b" stroke-width="1.8" fill="none" stroke-linecap="butt" stroke-linejoin="miter"/>
<path d="M402.75 482.7 L416.75 482.7" stroke="#1b631b" stroke-width="1.8" fill="none" stroke-linecap="butt" stroke-linejoin="miter"/>
<path d="M408.05 488.9 L411.45 488.9" stroke="#1b631b" stroke-width="1.8" fill="none" stroke-linecap="butt" stroke-linejoin="miter"/>
<path d="M634.75 251.4 L734.75 251.4" stroke="#1b631b" stroke-width="1.6" fill="none" stroke-linecap="butt" stroke-linejoin="miter"/>
<path d="M634.75 263.9 L734.75 263.9" stroke="#1b631b" stroke-width="1.6" fill="none" stroke-linecap="butt" stroke-linejoin="miter"/>
<path d="M634.75 276.4 L734.75 276.4" stroke="#1b631b" stroke-width="1.6" fill="none" stroke-linecap="butt" stroke-linejoin="miter"/>
<path d="M634.75 288.9 L734.75 288.9" stroke="#1b631b" stroke-width="1.6" fill="none" stroke-linecap="butt" stroke-linejoin="miter"/>
<path d="M634.75 301.4 L734.75 301.4" stroke="#1b631b" stroke-width="1.6" fill="none" stroke-linecap="butt" stroke-linejoin="miter"/>
<path d="M634.75 313.9 L734.75 313.9" stroke="#1b631b" stroke-width="1.6" fill="none" stroke-linecap="butt" stroke-linejoin="miter"/>
<path d="M634.75 326.4 L734.75 326.4" stroke="#1b631b" stroke-width="1.6" fill="none" stroke-linecap="butt" stroke-linejoin="miter"/>
<path d="M634.75 338.9 L734.75 338.9" stroke="#1b631b" stroke-width="1.6" fill="none" stroke-linecap="butt" stroke-linejoin="miter"/>
<rect x="759.75" y="238.9" width="75" height="150" fill="#c9c9ab" stroke="#a02626" stroke-width="1.5"/>
<text transform="translate(759.75 235.6) scale(0.93 1)" font-size="16" font-weight="normal" fill="#111111" text-anchor="start">U3</text>
<text transform="translate(758.2 399.5) scale(0.88 1)" font-size="10.5" font-weight="normal" fill="#111111" text-anchor="start" stroke="#111111" stroke-width="0.35">74LS245</text>
<text transform="translate(758 411.8) scale(0.93 1)" font-size="10.5" font-weight="normal" fill="#7e7e7e" text-anchor="start">&lt;TEXT&gt;</text>
<path d="M734.75 251.4 L759.75 251.4" stroke="#a02626" stroke-width="1.5" fill="none" stroke-linecap="butt" stroke-linejoin="miter"/>
<rect x="748.1" y="242.3" width="6.2" height="6.2" fill="#ff4242"/>
<text transform="translate(745.8 249.4) scale(0.72 1)" font-size="10.5" font-weight="bold" fill="#111111" text-anchor="end" stroke="#111111" stroke-width="0.25" letter-spacing="0.8">2</text>
<text transform="translate(765 254.8) scale(0.78 1)" font-size="10" font-weight="bold" fill="#111111" text-anchor="start" stroke="#111111" stroke-width="0.25" letter-spacing="1.5">A0</text>
<path d="M734.75 263.9 L759.75 263.9" stroke="#a02626" stroke-width="1.5" fill="none" stroke-linecap="butt" stroke-linejoin="miter"/>
<rect x="748.1" y="254.8" width="6.2" height="6.2" fill="#ff4242"/>
<text transform="translate(745.8 261.9) scale(0.72 1)" font-size="10.5" font-weight="bold" fill="#111111" text-anchor="end" stroke="#111111" stroke-width="0.25" letter-spacing="0.8">3</text>
<text transform="translate(765 267.3) scale(0.78 1)" font-size="10" font-weight="bold" fill="#111111" text-anchor="start" stroke="#111111" stroke-width="0.25" letter-spacing="1.5">A1</text>
<path d="M734.75 276.4 L759.75 276.4" stroke="#a02626" stroke-width="1.5" fill="none" stroke-linecap="butt" stroke-linejoin="miter"/>
<rect x="748.1" y="267.3" width="6.2" height="6.2" fill="#ff4242"/>
<text transform="translate(745.8 274.4) scale(0.72 1)" font-size="10.5" font-weight="bold" fill="#111111" text-anchor="end" stroke="#111111" stroke-width="0.25" letter-spacing="0.8">4</text>
<text transform="translate(765 279.8) scale(0.78 1)" font-size="10" font-weight="bold" fill="#111111" text-anchor="start" stroke="#111111" stroke-width="0.25" letter-spacing="1.5">A2</text>
<path d="M734.75 288.9 L759.75 288.9" stroke="#a02626" stroke-width="1.5" fill="none" stroke-linecap="butt" stroke-linejoin="miter"/>
<rect x="748.1" y="279.8" width="6.2" height="6.2" fill="#ff4242"/>
<text transform="translate(745.8 286.9) scale(0.72 1)" font-size="10.5" font-weight="bold" fill="#111111" text-anchor="end" stroke="#111111" stroke-width="0.25" letter-spacing="0.8">5</text>
<text transform="translate(765 292.3) scale(0.78 1)" font-size="10" font-weight="bold" fill="#111111" text-anchor="start" stroke="#111111" stroke-width="0.25" letter-spacing="1.5">A3</text>
<path d="M734.75 301.4 L759.75 301.4" stroke="#a02626" stroke-width="1.5" fill="none" stroke-linecap="butt" stroke-linejoin="miter"/>
<rect x="748.1" y="292.3" width="6.2" height="6.2" fill="#ff4242"/>
<text transform="translate(745.8 299.4) scale(0.72 1)" font-size="10.5" font-weight="bold" fill="#111111" text-anchor="end" stroke="#111111" stroke-width="0.25" letter-spacing="0.8">6</text>
<text transform="translate(765 304.8) scale(0.78 1)" font-size="10" font-weight="bold" fill="#111111" text-anchor="start" stroke="#111111" stroke-width="0.25" letter-spacing="1.5">A4</text>
<path d="M734.75 313.9 L759.75 313.9" stroke="#a02626" stroke-width="1.5" fill="none" stroke-linecap="butt" stroke-linejoin="miter"/>
<rect x="748.1" y="304.8" width="6.2" height="6.2" fill="#ff4242"/>
<text transform="translate(745.8 311.9) scale(0.72 1)" font-size="10.5" font-weight="bold" fill="#111111" text-anchor="end" stroke="#111111" stroke-width="0.25" letter-spacing="0.8">7</text>
<text transform="translate(765 317.3) scale(0.78 1)" font-size="10" font-weight="bold" fill="#111111" text-anchor="start" stroke="#111111" stroke-width="0.25" letter-spacing="1.5">A5</text>
<path d="M734.75 326.4 L759.75 326.4" stroke="#a02626" stroke-width="1.5" fill="none" stroke-linecap="butt" stroke-linejoin="miter"/>
<rect x="748.1" y="317.3" width="6.2" height="6.2" fill="#ff4242"/>
<text transform="translate(745.8 324.4) scale(0.72 1)" font-size="10.5" font-weight="bold" fill="#111111" text-anchor="end" stroke="#111111" stroke-width="0.25" letter-spacing="0.8">8</text>
<text transform="translate(765 329.8) scale(0.78 1)" font-size="10" font-weight="bold" fill="#111111" text-anchor="start" stroke="#111111" stroke-width="0.25" letter-spacing="1.5">A6</text>
<path d="M734.75 338.9 L759.75 338.9" stroke="#a02626" stroke-width="1.5" fill="none" stroke-linecap="butt" stroke-linejoin="miter"/>
<rect x="748.1" y="329.8" width="6.2" height="6.2" fill="#ff4242"/>
<text transform="translate(745.8 336.9) scale(0.72 1)" font-size="10.5" font-weight="bold" fill="#111111" text-anchor="end" stroke="#111111" stroke-width="0.25" letter-spacing="0.8">9</text>
<text transform="translate(765 342.3) scale(0.78 1)" font-size="10" font-weight="bold" fill="#111111" text-anchor="start" stroke="#111111" stroke-width="0.25" letter-spacing="1.5">A7</text>
<path d="M834.75 251.4 L859.75 251.4" stroke="#a02626" stroke-width="1.5" fill="none" stroke-linecap="butt" stroke-linejoin="miter"/>
<path d="M859.75 251.4 L922.25 251.4" stroke="#1b631b" stroke-width="1.6" fill="none" stroke-linecap="butt" stroke-linejoin="miter"/>
<rect x="839.5" y="242.3" width="6.2" height="6.2" fill="#ff4242"/>
<text transform="translate(848 249.4) scale(0.72 1)" font-size="10.5" font-weight="bold" fill="#111111" text-anchor="start" stroke="#111111" stroke-width="0.25" letter-spacing="0.8">18</text>
<text transform="translate(827.5 254.8) scale(0.78 1)" font-size="10" font-weight="bold" fill="#111111" text-anchor="end" stroke="#111111" stroke-width="0.25" letter-spacing="1.5">B0</text>
<text transform="translate(884.8 249.4) scale(0.78 1)" font-size="10" font-weight="bold" fill="#111111" text-anchor="start" stroke="#111111" stroke-width="0.25" letter-spacing="1.5">D0</text>
<path d="M834.75 263.9 L859.75 263.9" stroke="#a02626" stroke-width="1.5" fill="none" stroke-linecap="butt" stroke-linejoin="miter"/>
<path d="M859.75 263.9 L922.25 263.9" stroke="#1b631b" stroke-width="1.6" fill="none" stroke-linecap="butt" stroke-linejoin="miter"/>
<rect x="839.5" y="254.8" width="6.2" height="6.2" fill="#ff4242"/>
<text transform="translate(848 261.9) scale(0.72 1)" font-size="10.5" font-weight="bold" fill="#111111" text-anchor="start" stroke="#111111" stroke-width="0.25" letter-spacing="0.8">17</text>
<text transform="translate(827.5 267.3) scale(0.78 1)" font-size="10" font-weight="bold" fill="#111111" text-anchor="end" stroke="#111111" stroke-width="0.25" letter-spacing="1.5">B1</text>
<text transform="translate(884.8 261.9) scale(0.78 1)" font-size="10" font-weight="bold" fill="#111111" text-anchor="start" stroke="#111111" stroke-width="0.25" letter-spacing="1.5">D1</text>
<path d="M834.75 276.4 L859.75 276.4" stroke="#a02626" stroke-width="1.5" fill="none" stroke-linecap="butt" stroke-linejoin="miter"/>
<path d="M859.75 276.4 L922.25 276.4" stroke="#1b631b" stroke-width="1.6" fill="none" stroke-linecap="butt" stroke-linejoin="miter"/>
<rect x="839.5" y="267.3" width="6.2" height="6.2" fill="#ff4242"/>
<text transform="translate(848 274.4) scale(0.72 1)" font-size="10.5" font-weight="bold" fill="#111111" text-anchor="start" stroke="#111111" stroke-width="0.25" letter-spacing="0.8">16</text>
<text transform="translate(827.5 279.8) scale(0.78 1)" font-size="10" font-weight="bold" fill="#111111" text-anchor="end" stroke="#111111" stroke-width="0.25" letter-spacing="1.5">B2</text>
<text transform="translate(884.8 274.4) scale(0.78 1)" font-size="10" font-weight="bold" fill="#111111" text-anchor="start" stroke="#111111" stroke-width="0.25" letter-spacing="1.5">D2</text>
<path d="M834.75 288.9 L859.75 288.9" stroke="#a02626" stroke-width="1.5" fill="none" stroke-linecap="butt" stroke-linejoin="miter"/>
<path d="M859.75 288.9 L922.25 288.9" stroke="#1b631b" stroke-width="1.6" fill="none" stroke-linecap="butt" stroke-linejoin="miter"/>
<rect x="839.5" y="279.8" width="6.2" height="6.2" fill="#ff4242"/>
<text transform="translate(848 286.9) scale(0.72 1)" font-size="10.5" font-weight="bold" fill="#111111" text-anchor="start" stroke="#111111" stroke-width="0.25" letter-spacing="0.8">15</text>
<text transform="translate(827.5 292.3) scale(0.78 1)" font-size="10" font-weight="bold" fill="#111111" text-anchor="end" stroke="#111111" stroke-width="0.25" letter-spacing="1.5">B3</text>
<text transform="translate(884.8 286.9) scale(0.78 1)" font-size="10" font-weight="bold" fill="#111111" text-anchor="start" stroke="#111111" stroke-width="0.25" letter-spacing="1.5">D3</text>
<path d="M834.75 301.4 L859.75 301.4" stroke="#a02626" stroke-width="1.5" fill="none" stroke-linecap="butt" stroke-linejoin="miter"/>
<path d="M859.75 301.4 L922.25 301.4" stroke="#1b631b" stroke-width="1.6" fill="none" stroke-linecap="butt" stroke-linejoin="miter"/>
<rect x="839.5" y="292.3" width="6.2" height="6.2" fill="#ff4242"/>
<text transform="translate(848 299.4) scale(0.72 1)" font-size="10.5" font-weight="bold" fill="#111111" text-anchor="start" stroke="#111111" stroke-width="0.25" letter-spacing="0.8">14</text>
<text transform="translate(827.5 304.8) scale(0.78 1)" font-size="10" font-weight="bold" fill="#111111" text-anchor="end" stroke="#111111" stroke-width="0.25" letter-spacing="1.5">B4</text>
<text transform="translate(884.8 299.4) scale(0.78 1)" font-size="10" font-weight="bold" fill="#111111" text-anchor="start" stroke="#111111" stroke-width="0.25" letter-spacing="1.5">D4</text>
<path d="M834.75 313.9 L859.75 313.9" stroke="#a02626" stroke-width="1.5" fill="none" stroke-linecap="butt" stroke-linejoin="miter"/>
<path d="M859.75 313.9 L922.25 313.9" stroke="#1b631b" stroke-width="1.6" fill="none" stroke-linecap="butt" stroke-linejoin="miter"/>
<rect x="839.5" y="304.8" width="6.2" height="6.2" fill="#ff4242"/>
<text transform="translate(848 311.9) scale(0.72 1)" font-size="10.5" font-weight="bold" fill="#111111" text-anchor="start" stroke="#111111" stroke-width="0.25" letter-spacing="0.8">13</text>
<text transform="translate(827.5 317.3) scale(0.78 1)" font-size="10" font-weight="bold" fill="#111111" text-anchor="end" stroke="#111111" stroke-width="0.25" letter-spacing="1.5">B5</text>
<text transform="translate(884.8 311.9) scale(0.78 1)" font-size="10" font-weight="bold" fill="#111111" text-anchor="start" stroke="#111111" stroke-width="0.25" letter-spacing="1.5">D5</text>
<path d="M834.75 326.4 L859.75 326.4" stroke="#a02626" stroke-width="1.5" fill="none" stroke-linecap="butt" stroke-linejoin="miter"/>
<path d="M859.75 326.4 L922.25 326.4" stroke="#1b631b" stroke-width="1.6" fill="none" stroke-linecap="butt" stroke-linejoin="miter"/>
<rect x="839.5" y="317.3" width="6.2" height="6.2" fill="#ff4242"/>
<text transform="translate(848 324.4) scale(0.72 1)" font-size="10.5" font-weight="bold" fill="#111111" text-anchor="start" stroke="#111111" stroke-width="0.25" letter-spacing="0.8">12</text>
<text transform="translate(827.5 329.8) scale(0.78 1)" font-size="10" font-weight="bold" fill="#111111" text-anchor="end" stroke="#111111" stroke-width="0.25" letter-spacing="1.5">B6</text>
<text transform="translate(884.8 324.4) scale(0.78 1)" font-size="10" font-weight="bold" fill="#111111" text-anchor="start" stroke="#111111" stroke-width="0.25" letter-spacing="1.5">D6</text>
<path d="M834.75 338.9 L859.75 338.9" stroke="#a02626" stroke-width="1.5" fill="none" stroke-linecap="butt" stroke-linejoin="miter"/>
<path d="M859.75 338.9 L922.25 338.9" stroke="#1b631b" stroke-width="1.6" fill="none" stroke-linecap="butt" stroke-linejoin="miter"/>
<rect x="839.5" y="329.8" width="6.2" height="6.2" fill="#ff4242"/>
<text transform="translate(848 336.9) scale(0.72 1)" font-size="10.5" font-weight="bold" fill="#111111" text-anchor="start" stroke="#111111" stroke-width="0.25" letter-spacing="0.8">11</text>
<text transform="translate(827.5 342.3) scale(0.78 1)" font-size="10" font-weight="bold" fill="#111111" text-anchor="end" stroke="#111111" stroke-width="0.25" letter-spacing="1.5">B7</text>
<text transform="translate(884.8 336.9) scale(0.78 1)" font-size="10" font-weight="bold" fill="#111111" text-anchor="start" stroke="#111111" stroke-width="0.25" letter-spacing="1.5">D7</text>
<path d="M734.75 363.9 L759.75 363.9" stroke="#a02626" stroke-width="1.5" fill="none" stroke-linecap="butt" stroke-linejoin="miter"/>
<rect x="748.1" y="354.8" width="6.2" height="6.2" fill="#4444ff"/>
<text transform="translate(745.8 361.9) scale(0.72 1)" font-size="10.5" font-weight="bold" fill="#111111" text-anchor="end" stroke="#111111" stroke-width="0.25" letter-spacing="0.8">19</text>
<text transform="translate(765 367.3) scale(0.78 1)" font-size="10" font-weight="bold" fill="#111111" text-anchor="start" stroke="#111111" stroke-width="0.25" letter-spacing="1.5">CE</text>
<path d="M765 358.3 L781 358.3" stroke="#111111" stroke-width="1.1" fill="none" stroke-linecap="butt" stroke-linejoin="miter"/>
<path d="M734.75 376.4 L759.75 376.4" stroke="#a02626" stroke-width="1.5" fill="none" stroke-linecap="butt" stroke-linejoin="miter"/>
<rect x="748.1" y="367.3" width="6.2" height="6.2" fill="#ff4242"/>
<text transform="translate(745.8 374.4) scale(0.72 1)" font-size="10.5" font-weight="bold" fill="#111111" text-anchor="end" stroke="#111111" stroke-width="0.25" letter-spacing="0.8">1</text>
<text transform="translate(765 379.8) scale(0.78 1)" font-size="10" font-weight="bold" fill="#111111" text-anchor="start" stroke="#111111" stroke-width="0.25" letter-spacing="1.5">AB/BA</text>
<path d="M783 370.8 L797 370.8" stroke="#111111" stroke-width="1.1" fill="none" stroke-linecap="butt" stroke-linejoin="miter"/>
<circle cx="702.05" cy="363.9" r="5" fill="none" stroke="#1b631b" stroke-width="1.6"/>
<path d="M707.05 363.9 L734.75 363.9" stroke="#1b631b" stroke-width="1.6" fill="none" stroke-linecap="butt" stroke-linejoin="miter"/>
<text transform="translate(691 367.4) scale(0.78 1)" font-size="10" font-weight="bold" fill="#111111" text-anchor="end" stroke="#111111" stroke-width="0.25" letter-spacing="1.5">CE</text>
<circle cx="702.05" cy="376.4" r="5" fill="none" stroke="#1b631b" stroke-width="1.6"/>
<path d="M707.05 376.4 L734.75 376.4" stroke="#1b631b" stroke-width="1.6" fill="none" stroke-linecap="butt" stroke-linejoin="miter"/>
<text transform="translate(691 379.9) scale(0.78 1)" font-size="10" font-weight="bold" fill="#111111" text-anchor="end" stroke="#111111" stroke-width="0.25" letter-spacing="1.5">A8</text>
<path d="M677 357.7 L691.5 357.7" stroke="#111111" stroke-width="1.1" fill="none" stroke-linecap="butt" stroke-linejoin="miter"/>
<circle cx="902.25" cy="388.9" r="5" fill="none" stroke="#1b631b" stroke-width="1.6"/>
<path d="M907.25 388.9 L972.25 388.9" stroke="#1b631b" stroke-width="1.6" fill="none" stroke-linecap="butt" stroke-linejoin="miter"/>
<path d="M984.75 388.9 L972.25 382.3 L972.25 395.5 Z" fill="none" stroke="#1b631b" stroke-width="1.4"/>
<path d="M972.25 388.9 L983.75 388.9" stroke="#1b631b" stroke-width="1.6" fill="none" stroke-linecap="butt" stroke-linejoin="miter"/>
<text transform="translate(889 392.4) scale(0.78 1)" font-size="10" font-weight="bold" fill="#111111" text-anchor="end" stroke="#111111" stroke-width="0.25" letter-spacing="1.5">A8</text>
<circle cx="889.75" cy="413.9" r="5" fill="none" stroke="#1b631b" stroke-width="1.6"/>
<path d="M894.75 413.9 L972.25 413.9 L972.25 451.4" stroke="#1b631b" stroke-width="1.6" fill="none" stroke-linecap="butt" stroke-linejoin="miter"/>
<path d="M959.75 451.4 L984.75 451.4" stroke="#1b631b" stroke-width="1.8" fill="none" stroke-linecap="butt" stroke-linejoin="miter"/>
<path d="M965.25 457.7 L979.25 457.7" stroke="#1b631b" stroke-width="1.8" fill="none" stroke-linecap="butt" stroke-linejoin="miter"/>
<path d="M970.55 463.9 L973.95 463.9" stroke="#1b631b" stroke-width="1.8" fill="none" stroke-linecap="butt" stroke-linejoin="miter"/>
<text transform="translate(878.5 417.4) scale(0.78 1)" font-size="10" font-weight="bold" fill="#111111" text-anchor="end" stroke="#111111" stroke-width="0.25" letter-spacing="1.5">CE</text>
<path d="M864 407.7 L878.5 407.7" stroke="#111111" stroke-width="1.1" fill="none" stroke-linecap="butt" stroke-linejoin="miter"/>
<path d="M634.75 363.9 L684.75 363.9 L684.75 538.9 L697.25 538.9" stroke="#1b631b" stroke-width="1.6" fill="none" stroke-linecap="butt" stroke-linejoin="miter"/>
<path d="M634.75 376.4 L659.75 376.4 L659.75 626.4 L647.25 626.4 L647.25 651.4 L659.75 651.4" stroke="#1b631b" stroke-width="1.6" fill="none" stroke-linecap="butt" stroke-linejoin="miter"/>
<circle cx="622.5" cy="439" r="4.3" fill="none" stroke="#2828e0" stroke-width="1.1"/>
<path d="M622.5 431.8 L622.5 446" stroke="#2020e0" stroke-width="1.3" fill="none" stroke-linecap="butt" stroke-linejoin="miter"/>
<path d="M697.25 538.9 L716.25 538.9" stroke="#a02626" stroke-width="1.5" fill="none" stroke-linecap="butt" stroke-linejoin="miter"/>
<circle cx="713.6" cy="538.9" r="3" fill="#c9c9ab" stroke="#a02626" stroke-width="1.5"/>
<circle cx="743.6" cy="538.9" r="3" fill="#c9c9ab" stroke="#a02626" stroke-width="1.5"/>
<path d="M716.3 537.3 L740.5 522.2" stroke="#a02626" stroke-width="1.2" fill="none" stroke-linecap="butt" stroke-linejoin="miter"/>
<path d="M746.6 538.9 L759.75 538.9" stroke="#a02626" stroke-width="1.5" fill="none" stroke-linecap="butt" stroke-linejoin="miter"/>
<path d="M759.75 538.9 L784.75 538.9" stroke="#1b631b" stroke-width="1.6" fill="none" stroke-linecap="butt" stroke-linejoin="miter"/>
<circle cx="772.25" cy="538.9" r="3.2" fill="#1b631b"/>
<path d="M772.25 538.9 L772.25 601.4" stroke="#1b631b" stroke-width="1.6" fill="none" stroke-linecap="butt" stroke-linejoin="miter"/>
<path d="M759.75 601.4 L784.75 601.4" stroke="#1b631b" stroke-width="1.8" fill="none" stroke-linecap="butt" stroke-linejoin="miter"/>
<path d="M765.25 607.7 L779.25 607.7" stroke="#1b631b" stroke-width="1.8" fill="none" stroke-linecap="butt" stroke-linejoin="miter"/>
<path d="M770.55 613.9 L773.95 613.9" stroke="#1b631b" stroke-width="1.8" fill="none" stroke-linecap="butt" stroke-linejoin="miter"/>
<rect x="693.3" y="528.8" width="7" height="7" fill="#ff4242"/>
<circle cx="747.4" cy="526.3" r="5.2" fill="#000" stroke="#ff0000" stroke-width="1.6"/>
<path d="M747.4 523.3 L747.4 529.3" stroke="#ff2020" stroke-width="1.2" fill="none" stroke-linecap="butt" stroke-linejoin="miter"/>
<path d="M744.9 526.8 L747.4 529.8 L749.9 526.8" stroke="#ff2020" stroke-width="1.2" fill="none" stroke-linecap="butt" stroke-linejoin="miter"/>
<circle cx="760" cy="526.3" r="5.2" fill="#000" stroke="#ff0000" stroke-width="1.6"/>
<path d="M760 529.3 L760 523.3" stroke="#ff2020" stroke-width="1.2" fill="none" stroke-linecap="butt" stroke-linejoin="miter"/>
<path d="M757.5 525.8 L760 522.8 L762.5 525.8" stroke="#ff2020" stroke-width="1.2" fill="none" stroke-linecap="butt" stroke-linejoin="miter"/>
<rect x="756" y="528.5" width="7" height="7" fill="#4444ff"/>
<rect x="780.8" y="528.7" width="7" height="7" fill="#4444ff"/>
<path d="M784.75 538.9 L797.25 538.9" stroke="#a02626" stroke-width="1.5" fill="none" stroke-linecap="butt" stroke-linejoin="miter"/>
<path d="M834.75 538.9 L847.25 538.9" stroke="#a02626" stroke-width="1.5" fill="none" stroke-linecap="butt" stroke-linejoin="miter"/>
<rect x="797.25" y="533.9" width="37.5" height="10" fill="#c9c9ab" stroke="#a02626" stroke-width="1.5"/>
<rect x="843.3" y="528.7" width="7" height="7" fill="#ff4242"/>
<path d="M847.25 538.9 L897.25 538.9" stroke="#1b631b" stroke-width="1.6" fill="none" stroke-linecap="butt" stroke-linejoin="miter"/>
<path d="M909.75 538.9 L897.25 532.3 L897.25 545.5 Z" fill="none" stroke="#1b631b" stroke-width="1.4"/>
<path d="M897.25 538.9 L908.75 538.9" stroke="#1b631b" stroke-width="1.6" fill="none" stroke-linecap="butt" stroke-linejoin="miter"/>
<text transform="translate(796.5 530) scale(0.85 1)" font-size="16" font-weight="normal" fill="#111111" text-anchor="start">R1</text>
<text transform="translate(796.6 553.8) scale(0.8 1)" font-size="10" font-weight="bold" fill="#111111" text-anchor="start" stroke="#111111" stroke-width="0.3">10k</text>
<text transform="translate(795.6 566) scale(0.93 1)" font-size="10.5" font-weight="normal" fill="#7e7e7e" text-anchor="start">&lt;TEXT&gt;</text>
<path d="M659.75 651.4 L673.1 651.4" stroke="#a02626" stroke-width="1.5" fill="none" stroke-linecap="butt" stroke-linejoin="miter"/>
<circle cx="676.1" cy="651.4" r="3" fill="#c9c9ab" stroke="#a02626" stroke-width="1.5"/>
<circle cx="706.1" cy="651.4" r="3" fill="#c9c9ab" stroke="#a02626" stroke-width="1.5"/>
<path d="M679 651.4 L685 651.4 L685.5 648.9 L698 648.9 L698.5 647.4 L704 647.4 L706 649.4" stroke="#a02626" stroke-width="1.5" fill="none" stroke-linecap="butt" stroke-linejoin="miter"/>
<path d="M709.1 651.4 L722.25 651.4" stroke="#a02626" stroke-width="1.5" fill="none" stroke-linecap="butt" stroke-linejoin="miter"/>
<path d="M722.25 651.4 L797.25 651.4" stroke="#1b631b" stroke-width="1.6" fill="none" stroke-linecap="butt" stroke-linejoin="miter"/>
<circle cx="759.75" cy="651.4" r="3.2" fill="#1b631b"/>
<path d="M759.75 651.4 L759.75 701.4" stroke="#1b631b" stroke-width="1.6" fill="none" stroke-linecap="butt" stroke-linejoin="miter"/>
<path d="M747.25 701.4 L772.25 701.4" stroke="#1b631b" stroke-width="1.8" fill="none" stroke-linecap="butt" stroke-linejoin="miter"/>
<path d="M752.75 707.7 L766.75 707.7" stroke="#1b631b" stroke-width="1.8" fill="none" stroke-linecap="butt" stroke-linejoin="miter"/>
<path d="M758.05 713.9 L761.45 713.9" stroke="#1b631b" stroke-width="1.8" fill="none" stroke-linecap="butt" stroke-linejoin="miter"/>
<rect x="655.8" y="641.3" width="7" height="7" fill="#4444ff"/>
<circle cx="709.8" cy="638.9" r="5.2" fill="#000" stroke="#ff0000" stroke-width="1.6"/>
<path d="M709.8 635.9 L709.8 641.9" stroke="#ff2020" stroke-width="1.2" fill="none" stroke-linecap="butt" stroke-linejoin="miter"/>
<path d="M707.3 639.4 L709.8 642.4 L712.3 639.4" stroke="#ff2020" stroke-width="1.2" fill="none" stroke-linecap="butt" stroke-linejoin="miter"/>
<circle cx="722.4" cy="638.9" r="5.2" fill="#000" stroke="#ff0000" stroke-width="1.6"/>
<path d="M722.4 641.9 L722.4 635.9" stroke="#ff2020" stroke-width="1.2" fill="none" stroke-linecap="butt" stroke-linejoin="miter"/>
<path d="M719.9 638.4 L722.4 635.4 L724.9 638.4" stroke="#ff2020" stroke-width="1.2" fill="none" stroke-linecap="butt" stroke-linejoin="miter"/>
<rect x="718.5" y="641.3" width="7" height="7" fill="#4444ff"/>
<rect x="793.2" y="641.3" width="7" height="7" fill="#4444ff"/>
<path d="M797.25 651.4 L809.75 651.4" stroke="#a02626" stroke-width="1.5" fill="none" stroke-linecap="butt" stroke-linejoin="miter"/>
<path d="M847.25 651.4 L859.75 651.4" stroke="#a02626" stroke-width="1.5" fill="none" stroke-linecap="butt" stroke-linejoin="miter"/>
<rect x="809.75" y="646.4" width="37.5" height="10" fill="#c9c9ab" stroke="#a02626" stroke-width="1.5"/>
<rect x="856" y="641.3" width="7" height="7" fill="#ff4242"/>
<path d="M859.75 651.4 L909.75 651.4" stroke="#1b631b" stroke-width="1.6" fill="none" stroke-linecap="butt" stroke-linejoin="miter"/>
<path d="M922.25 651.4 L909.75 644.8 L909.75 658 Z" fill="none" stroke="#1b631b" stroke-width="1.4"/>
<path d="M909.75 651.4 L921.25 651.4" stroke="#1b631b" stroke-width="1.6" fill="none" stroke-linecap="butt" stroke-linejoin="miter"/>
<text transform="translate(808.7 642.5) scale(0.88 1)" font-size="16" font-weight="normal" fill="#111111" text-anchor="start">R2</text>
<text transform="translate(809 666.4) scale(0.8 1)" font-size="10" font-weight="bold" fill="#111111" text-anchor="start" stroke="#111111" stroke-width="0.3">10k</text>
<text transform="translate(807.7 678.3) scale(0.93 1)" font-size="10.5" font-weight="normal" fill="#7e7e7e" text-anchor="start">&lt;TEXT&gt;</text>
<rect x="159.75" y="401.4" width="112.5" height="137.5" fill="#c9c9ab" stroke="#a02626" stroke-width="1.5"/>
<text transform="translate(159.75 398.3) scale(0.93 1)" font-size="16" font-weight="normal" fill="#111111" text-anchor="start">U1</text>
<text transform="translate(159 548.2) scale(0.88 1)" font-size="10.5" font-weight="normal" fill="#111111" text-anchor="start" stroke="#111111" stroke-width="0.35">8086</text>
<text transform="translate(159 561.2) scale(0.98 1)" font-size="10.5" font-weight="normal" fill="#111111" text-anchor="start" stroke="#111111" stroke-width="0.35">SRCFILE=E:\masm\6.asm</text>
<path d="M134.75 413.9 L159.75 413.9" stroke="#a02626" stroke-width="1.5" fill="none" stroke-linecap="butt" stroke-linejoin="miter"/>
<rect x="149.3" y="404.9" width="6.4" height="6.4" fill="#4444ff"/>
<text transform="translate(145.5 411.9) scale(0.72 1)" font-size="10.5" font-weight="bold" fill="#111111" text-anchor="end" stroke="#111111" stroke-width="0.25" letter-spacing="0.8">21</text>
<text transform="translate(166.7 417.3) scale(0.8 1)" font-size="10" font-weight="normal" fill="#111111" text-anchor="start" stroke="#111111" stroke-width="0.3" letter-spacing="1.5">RESET</text>
<path d="M134.75 426.4 L159.75 426.4" stroke="#a02626" stroke-width="1.5" fill="none" stroke-linecap="butt" stroke-linejoin="miter"/>
<rect x="149.3" y="417.4" width="6.4" height="6.4" fill="#ff4242"/>
<text transform="translate(145.5 424.4) scale(0.72 1)" font-size="10.5" font-weight="bold" fill="#111111" text-anchor="end" stroke="#111111" stroke-width="0.25" letter-spacing="0.8">22</text>
<text transform="translate(166.7 429.8) scale(0.8 1)" font-size="10" font-weight="normal" fill="#111111" text-anchor="start" stroke="#111111" stroke-width="0.3" letter-spacing="1.5">READY</text>
<path d="M134.75 438.9 L152.75 438.9" stroke="#a02626" stroke-width="1.5" fill="none" stroke-linecap="butt" stroke-linejoin="miter"/>
<circle cx="156.25" cy="438.9" r="3.5" fill="#c9c9ab" stroke="#a02626" stroke-width="1.3"/>
<rect x="149.3" y="429.9" width="6.4" height="6.4" fill="#858585"/>
<text transform="translate(145.5 436.9) scale(0.72 1)" font-size="10.5" font-weight="bold" fill="#111111" text-anchor="end" stroke="#111111" stroke-width="0.25" letter-spacing="0.8">24</text>
<text transform="translate(166.7 442.3) scale(0.8 1)" font-size="10" font-weight="normal" fill="#111111" text-anchor="start" stroke="#111111" stroke-width="0.3" letter-spacing="1.5">INTA/QS1</text>
<path d="M134.75 451.4 L159.75 451.4" stroke="#a02626" stroke-width="1.5" fill="none" stroke-linecap="butt" stroke-linejoin="miter"/>
<rect x="149.3" y="442.4" width="6.4" height="6.4" fill="#858585"/>
<text transform="translate(145.5 449.4) scale(0.72 1)" font-size="10.5" font-weight="bold" fill="#111111" text-anchor="end" stroke="#111111" stroke-width="0.25" letter-spacing="0.8">18</text>
<text transform="translate(166.7 454.8) scale(0.8 1)" font-size="10" font-weight="normal" fill="#111111" text-anchor="start" stroke="#111111" stroke-width="0.3" letter-spacing="1.5">INTR</text>
<path d="M134.75 463.9 L159.75 463.9" stroke="#a02626" stroke-width="1.5" fill="none" stroke-linecap="butt" stroke-linejoin="miter"/>
<rect x="149.3" y="454.9" width="6.4" height="6.4" fill="#858585"/>
<text transform="translate(145.5 461.9) scale(0.72 1)" font-size="10.5" font-weight="bold" fill="#111111" text-anchor="end" stroke="#111111" stroke-width="0.25" letter-spacing="0.8">31</text>
<text transform="translate(166.7 467.3) scale(0.8 1)" font-size="10" font-weight="normal" fill="#111111" text-anchor="start" stroke="#111111" stroke-width="0.3" letter-spacing="1.5">HOLD/GT1</text>
<path d="M134.75 476.4 L159.75 476.4" stroke="#a02626" stroke-width="1.5" fill="none" stroke-linecap="butt" stroke-linejoin="miter"/>
<rect x="149.3" y="467.4" width="6.4" height="6.4" fill="#4444ff"/>
<text transform="translate(145.5 474.4) scale(0.72 1)" font-size="10.5" font-weight="bold" fill="#111111" text-anchor="end" stroke="#111111" stroke-width="0.25" letter-spacing="0.8">30</text>
<text transform="translate(166.7 479.8) scale(0.8 1)" font-size="10" font-weight="normal" fill="#111111" text-anchor="start" stroke="#111111" stroke-width="0.3" letter-spacing="1.5">HLDA/GT0</text>
<path d="M134.75 488.9 L152.75 488.9" stroke="#a02626" stroke-width="1.5" fill="none" stroke-linecap="butt" stroke-linejoin="miter"/>
<circle cx="156.25" cy="488.9" r="3.5" fill="#c9c9ab" stroke="#a02626" stroke-width="1.3"/>
<rect x="149.3" y="479.9" width="6.4" height="6.4" fill="#858585"/>
<text transform="translate(145.5 486.9) scale(0.72 1)" font-size="10.5" font-weight="bold" fill="#111111" text-anchor="end" stroke="#111111" stroke-width="0.25" letter-spacing="0.8">23</text>
<text transform="translate(166.7 492.3) scale(0.8 1)" font-size="10" font-weight="normal" fill="#111111" text-anchor="start" stroke="#111111" stroke-width="0.3" letter-spacing="1.5">TEST</text>
<path d="M134.75 501.4 L159.75 501.4" stroke="#a02626" stroke-width="1.5" fill="none" stroke-linecap="butt" stroke-linejoin="miter"/>
<rect x="149.3" y="492.4" width="6.4" height="6.4" fill="#858585"/>
<text transform="translate(145.5 499.4) scale(0.72 1)" font-size="10.5" font-weight="bold" fill="#111111" text-anchor="end" stroke="#111111" stroke-width="0.25" letter-spacing="0.8">17</text>
<text transform="translate(166.7 504.8) scale(0.8 1)" font-size="10" font-weight="normal" fill="#111111" text-anchor="start" stroke="#111111" stroke-width="0.3" letter-spacing="1.5">NMI</text>
<path d="M134.75 513.9 L159.75 513.9" stroke="#a02626" stroke-width="1.5" fill="none" stroke-linecap="butt" stroke-linejoin="miter"/>
<rect x="149.3" y="504.9" width="6.4" height="6.4" fill="#ff4242"/>
<text transform="translate(145.5 511.9) scale(0.72 1)" font-size="10.5" font-weight="bold" fill="#111111" text-anchor="end" stroke="#111111" stroke-width="0.25" letter-spacing="0.8">33</text>
<text transform="translate(166.7 517.3) scale(0.8 1)" font-size="10" font-weight="normal" fill="#111111" text-anchor="start" stroke="#111111" stroke-width="0.3" letter-spacing="1.5">MN/MX</text>
<path d="M134.75 526.4 L159.75 526.4" stroke="#a02626" stroke-width="1.5" fill="none" stroke-linecap="butt" stroke-linejoin="miter"/>
<rect x="149.3" y="517.4" width="6.4" height="6.4" fill="#858585"/>
<text transform="translate(145.5 524.4) scale(0.72 1)" font-size="10.5" font-weight="bold" fill="#111111" text-anchor="end" stroke="#111111" stroke-width="0.25" letter-spacing="0.8">19</text>
<text transform="translate(166.7 529.8) scale(0.8 1)" font-size="10" font-weight="normal" fill="#111111" text-anchor="start" stroke="#111111" stroke-width="0.3" letter-spacing="1.5">CLK</text>
<path d="M166 432.9 L188.5 432.9" stroke="#111111" stroke-width="1.2" fill="none" stroke-linecap="butt" stroke-linejoin="miter"/>
<path d="M198 457.9 L217.5 457.9" stroke="#111111" stroke-width="1.2" fill="none" stroke-linecap="butt" stroke-linejoin="miter"/>
<path d="M197 470.4 L216.5 470.4" stroke="#111111" stroke-width="1.2" fill="none" stroke-linecap="butt" stroke-linejoin="miter"/>
<path d="M165.5 482.9 L193 482.9" stroke="#111111" stroke-width="1.2" fill="none" stroke-linecap="butt" stroke-linejoin="miter"/>
<path d="M186.3 507.9 L200.4 507.9" stroke="#111111" stroke-width="1.2" fill="none" stroke-linecap="butt" stroke-linejoin="miter"/>
<path d="M272.25 451.4 L297.25 451.4" stroke="#a02626" stroke-width="1.5" fill="none" stroke-linecap="butt" stroke-linejoin="miter"/>
<rect x="278.1" y="442.8" width="6.2" height="6.2" fill="#4444ff"/>
<text transform="translate(284.4 449.4) scale(0.72 1)" font-size="10.5" font-weight="bold" fill="#111111" text-anchor="start" stroke="#111111" stroke-width="0.25" letter-spacing="0.8">25</text>
<text transform="translate(264 454.8) scale(0.8 1)" font-size="10" font-weight="normal" fill="#111111" text-anchor="end" stroke="#111111" stroke-width="0.3" letter-spacing="1.5">ALE/QS0</text>
<circle cx="276.05" cy="463.9" r="3.6" fill="#c9c9ab" stroke="#a02626" stroke-width="1.3"/>
<path d="M279.65 463.9 L297.25 463.9" stroke="#a02626" stroke-width="1.5" fill="none" stroke-linecap="butt" stroke-linejoin="miter"/>
<rect x="278.1" y="455.3" width="6.2" height="6.2" fill="#ff4242"/>
<text transform="translate(284.4 461.9) scale(0.72 1)" font-size="10.5" font-weight="bold" fill="#111111" text-anchor="start" stroke="#111111" stroke-width="0.25" letter-spacing="0.8">34</text>
<text transform="translate(264 467.3) scale(0.8 1)" font-size="10" font-weight="normal" fill="#111111" text-anchor="end" stroke="#111111" stroke-width="0.3" letter-spacing="1.5">BHE</text>
<path d="M272.25 476.4 L297.25 476.4" stroke="#a02626" stroke-width="1.5" fill="none" stroke-linecap="butt" stroke-linejoin="miter"/>
<rect x="278.1" y="467.8" width="6.2" height="6.2" fill="#ff4242"/>
<text transform="translate(284.4 474.4) scale(0.72 1)" font-size="10.5" font-weight="bold" fill="#111111" text-anchor="start" stroke="#111111" stroke-width="0.25" letter-spacing="0.8">27</text>
<text transform="translate(264 479.8) scale(0.8 1)" font-size="10" font-weight="normal" fill="#111111" text-anchor="end" stroke="#111111" stroke-width="0.3" letter-spacing="1.5">DT/R/S1</text>
<circle cx="276.05" cy="488.9" r="3.6" fill="#c9c9ab" stroke="#a02626" stroke-width="1.3"/>
<path d="M279.65 488.9 L297.25 488.9" stroke="#a02626" stroke-width="1.5" fill="none" stroke-linecap="butt" stroke-linejoin="miter"/>
<rect x="278.1" y="480.3" width="6.2" height="6.2" fill="#4444ff"/>
<text transform="translate(284.4 486.9) scale(0.72 1)" font-size="10.5" font-weight="bold" fill="#111111" text-anchor="start" stroke="#111111" stroke-width="0.25" letter-spacing="0.8">26</text>
<text transform="translate(264 492.3) scale(0.8 1)" font-size="10" font-weight="normal" fill="#111111" text-anchor="end" stroke="#111111" stroke-width="0.3" letter-spacing="1.5">DEN/S2</text>
<circle cx="276.05" cy="501.4" r="3.6" fill="#c9c9ab" stroke="#a02626" stroke-width="1.3"/>
<path d="M279.65 501.4 L297.25 501.4" stroke="#a02626" stroke-width="1.5" fill="none" stroke-linecap="butt" stroke-linejoin="miter"/>
<rect x="278.1" y="492.8" width="6.2" height="6.2" fill="#ff4242"/>
<text transform="translate(284.4 499.4) scale(0.72 1)" font-size="10.5" font-weight="bold" fill="#111111" text-anchor="start" stroke="#111111" stroke-width="0.25" letter-spacing="0.8">32</text>
<text transform="translate(264 504.8) scale(0.8 1)" font-size="10" font-weight="normal" fill="#111111" text-anchor="end" stroke="#111111" stroke-width="0.3" letter-spacing="1.5">RD</text>
<circle cx="276.05" cy="513.9" r="3.6" fill="#c9c9ab" stroke="#a02626" stroke-width="1.3"/>
<path d="M279.65 513.9 L297.25 513.9" stroke="#a02626" stroke-width="1.5" fill="none" stroke-linecap="butt" stroke-linejoin="miter"/>
<rect x="278.1" y="505.3" width="6.2" height="6.2" fill="#ff4242"/>
<text transform="translate(284.4 511.9) scale(0.72 1)" font-size="10.5" font-weight="bold" fill="#111111" text-anchor="start" stroke="#111111" stroke-width="0.25" letter-spacing="0.8">29</text>
<text transform="translate(264 517.3) scale(0.8 1)" font-size="10" font-weight="normal" fill="#111111" text-anchor="end" stroke="#111111" stroke-width="0.3" letter-spacing="1.5">WR/LOCK</text>
<path d="M272.25 526.4 L297.25 526.4" stroke="#a02626" stroke-width="1.5" fill="none" stroke-linecap="butt" stroke-linejoin="miter"/>
<rect x="278.1" y="517.8" width="6.2" height="6.2" fill="#ff4242"/>
<text transform="translate(284.4 524.4) scale(0.72 1)" font-size="10.5" font-weight="bold" fill="#111111" text-anchor="start" stroke="#111111" stroke-width="0.25" letter-spacing="0.8">28</text>
<text transform="translate(264 529.8) scale(0.8 1)" font-size="10" font-weight="normal" fill="#111111" text-anchor="end" stroke="#111111" stroke-width="0.3" letter-spacing="1.5">M/IO/S0</text>
<text transform="translate(262.5 417.3) scale(0.8 1)" font-size="10" font-weight="normal" fill="#111111" text-anchor="end" stroke="#111111" stroke-width="0.3" letter-spacing="0.3">AD[0..15]</text>
<text transform="translate(262.5 429.8) scale(0.8 1)" font-size="10" font-weight="normal" fill="#111111" text-anchor="end" stroke="#111111" stroke-width="0.3" letter-spacing="0.3">A[16..19]</text>
<path d="M245.7 457.9 L266.5 457.9" stroke="#111111" stroke-width="1.2" fill="none" stroke-linecap="butt" stroke-linejoin="miter"/>
<path d="M243.2 470.4 L250 470.4" stroke="#111111" stroke-width="1.2" fill="none" stroke-linecap="butt" stroke-linejoin="miter"/>
<path d="M253 470.4 L266.5 470.4" stroke="#111111" stroke-width="1.2" fill="none" stroke-linecap="butt" stroke-linejoin="miter"/>
<path d="M229 482.9 L250 482.9" stroke="#111111" stroke-width="1.2" fill="none" stroke-linecap="butt" stroke-linejoin="miter"/>
<path d="M253 482.9 L266.5 482.9" stroke="#111111" stroke-width="1.2" fill="none" stroke-linecap="butt" stroke-linejoin="miter"/>
<path d="M251.8 495.4 L266.5 495.4" stroke="#111111" stroke-width="1.2" fill="none" stroke-linecap="butt" stroke-linejoin="miter"/>
<path d="M218 507.9 L235.3 507.9" stroke="#111111" stroke-width="1.2" fill="none" stroke-linecap="butt" stroke-linejoin="miter"/>
<path d="M238.3 507.9 L266.5 507.9" stroke="#111111" stroke-width="1.2" fill="none" stroke-linecap="butt" stroke-linejoin="miter"/>
<path d="M239.3 520.4 L250 520.4" stroke="#111111" stroke-width="1.2" fill="none" stroke-linecap="butt" stroke-linejoin="miter"/>
<path d="M253 520.4 L266.5 520.4" stroke="#111111" stroke-width="1.2" fill="none" stroke-linecap="butt" stroke-linejoin="miter"/>
<path d="M297.25 501.4 L337.2 501.4" stroke="#1b631b" stroke-width="1.6" fill="none" stroke-linecap="butt" stroke-linejoin="miter"/>
<circle cx="342.5" cy="501.4" r="5.2" fill="none" stroke="#1b631b" stroke-width="1.6"/>
<text transform="translate(353.4 504.9) scale(0.78 1)" font-size="10" font-weight="bold" fill="#111111" text-anchor="start" stroke="#111111" stroke-width="0.25" letter-spacing="1.5">RD</text>
<path d="M297.25 513.9 L337.2 513.9" stroke="#1b631b" stroke-width="1.6" fill="none" stroke-linecap="butt" stroke-linejoin="miter"/>
<circle cx="342.5" cy="513.9" r="5.2" fill="none" stroke="#1b631b" stroke-width="1.6"/>
<text transform="translate(353.4 517.4) scale(0.78 1)" font-size="10" font-weight="bold" fill="#111111" text-anchor="start" stroke="#111111" stroke-width="0.25" letter-spacing="1.5">WR</text>
<path d="M297.25 526.4 L337.2 526.4" stroke="#1b631b" stroke-width="1.6" fill="none" stroke-linecap="butt" stroke-linejoin="miter"/>
<circle cx="342.5" cy="526.4" r="5.2" fill="none" stroke="#1b631b" stroke-width="1.6"/>
<text transform="translate(353.4 529.9) scale(0.78 1)" font-size="10" font-weight="bold" fill="#111111" text-anchor="start" stroke="#111111" stroke-width="0.25" letter-spacing="1.5">M/IO</text>
<path d="M353 495.4 L368 495.4" stroke="#111111" stroke-width="1.1" fill="none" stroke-linecap="butt" stroke-linejoin="miter"/>
<path d="M353 507.9 L368.6 507.9" stroke="#111111" stroke-width="1.1" fill="none" stroke-linecap="butt" stroke-linejoin="miter"/>
<path d="M366 520.1 L375.6 520.1" stroke="#111111" stroke-width="1.1" fill="none" stroke-linecap="butt" stroke-linejoin="miter"/>
<path d="M134.75 413.9 L59.75 413.9 L59.75 563.9" stroke="#1b631b" stroke-width="1.6" fill="none" stroke-linecap="butt" stroke-linejoin="miter"/>
<path d="M47.25 563.9 L72.25 563.9" stroke="#1b631b" stroke-width="1.8" fill="none" stroke-linecap="butt" stroke-linejoin="miter"/>
<path d="M52.75 570.2 L66.75 570.2" stroke="#1b631b" stroke-width="1.8" fill="none" stroke-linecap="butt" stroke-linejoin="miter"/>
<path d="M58.05 576.4 L61.45 576.4" stroke="#1b631b" stroke-width="1.8" fill="none" stroke-linecap="butt" stroke-linejoin="miter"/>
<path d="M134.75 426.4 L109.75 426.4 L109.75 513.9" stroke="#1b631b" stroke-width="1.6" fill="none" stroke-linecap="butt" stroke-linejoin="miter"/>
<path d="M134.75 513.9 L84.75 513.9 L84.75 371" stroke="#1b631b" stroke-width="1.6" fill="none" stroke-linecap="butt" stroke-linejoin="miter"/>
<path d="M84.75 370 L78.15 382.6 L91.35 382.6 Z" fill="none" stroke="#1b631b" stroke-width="1.4"/>
<path d="M84.75 382.6 L84.75 371" stroke="#1b631b" stroke-width="1.6" fill="none" stroke-linecap="butt" stroke-linejoin="miter"/>
<circle cx="109.75" cy="513.9" r="3.4" fill="#1b631b"/>
</svg></body></html>
